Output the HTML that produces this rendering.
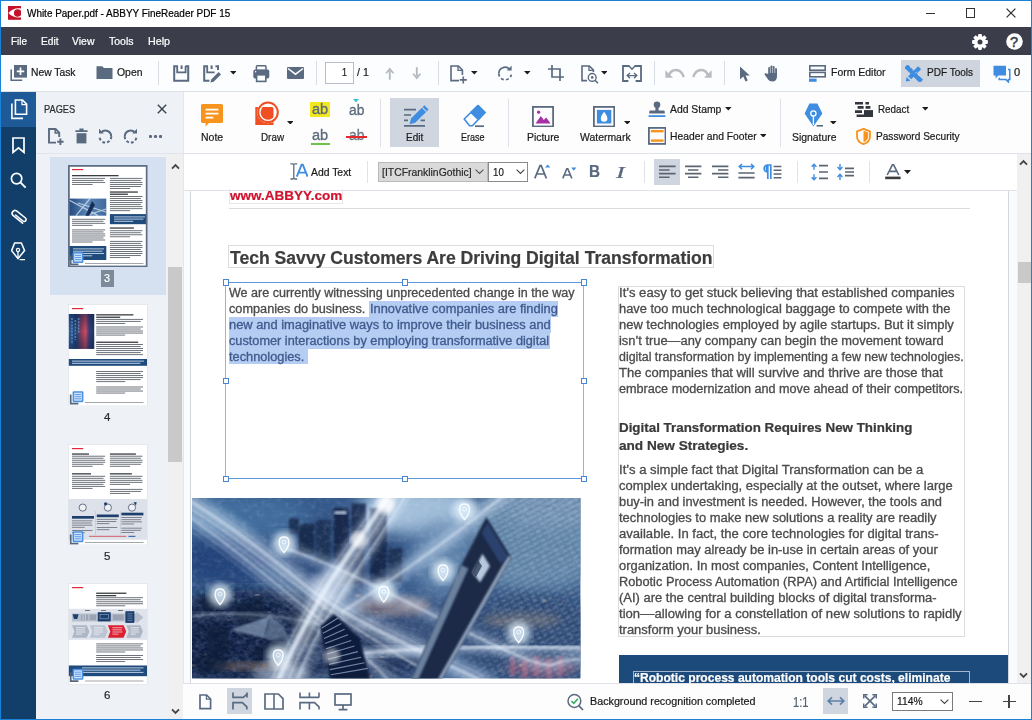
<!DOCTYPE html>
<html>
<head>
<meta charset="utf-8">
<title>White Paper.pdf - ABBYY FineReader PDF 15</title>
<style>
*{margin:0;padding:0;box-sizing:border-box;}
html,body{width:1032px;height:720px;overflow:hidden;background:#fff;}
body{font-family:"Liberation Sans",sans-serif;font-size:12px;color:#1e1e1e;position:relative;}
.abs{position:absolute;display:block;}
.t{position:absolute;display:block;white-space:nowrap;line-height:1;transform-origin:0 0;-webkit-text-stroke-width:0.22px;}
#frame{position:absolute;left:0;top:0;width:1032px;height:720px;border:1px solid #1a82d6;z-index:50;}

</style>
</head>
<body>
<div class="abs" style="left:0.00px;top:0.00px;width:1032.00px;height:27.00px;background:#fff;"></div>
<svg class="abs" style="left:8.00px;top:6.10px;" width="13.2" height="13.8" viewBox="0 0 13.2 13.8"><rect width="13.2" height="13.8" fill="#c4122b"/><path d="M0.4 6.9C3.6 3.4 8.4 1.6 13.2 2.6V11.2C8.4 12.2 3.6 10.4 0.4 6.9Z" fill="#fff"/><circle cx="9.7" cy="6.9" r="3.75" fill="#c4122b"/></svg>
<span class="t" style="left:26.80px;top:8.22px;font-size:11.20px;color:#000;transform:scaleX(0.8888);">White Paper.pdf - ABBYY FineReader PDF 15</span>
<div class="abs" style="left:926.20px;top:12.80px;width:9.20px;height:1.40px;background:#333;"></div>
<div class="abs" style="left:965.80px;top:8.40px;width:9.40px;height:9.40px;border:1.3px solid #333;"></div>
<svg class="abs" style="left:1006.20px;top:8.40px;" width="10" height="10" viewBox="0 0 10 10"><path d="M0.6 0.6L9.4 9.4M9.4 0.6L0.6 9.4" stroke="#333" stroke-width="1.3" fill="none"/></svg>
<div class="abs" style="left:0.00px;top:27.00px;width:1032.00px;height:28.00px;background:#3b3d4a;"></div>
<span class="t" style="left:11.00px;top:35.92px;font-size:11.20px;color:#fff;transform:scaleX(0.8876);">File</span>
<span class="t" style="left:41.00px;top:35.92px;font-size:11.20px;color:#fff;transform:scaleX(0.9078);">Edit</span>
<span class="t" style="left:72.00px;top:35.92px;font-size:11.20px;color:#fff;transform:scaleX(0.9357);">View</span>
<span class="t" style="left:109.00px;top:35.92px;font-size:11.20px;color:#fff;transform:scaleX(0.9381);">Tools</span>
<span class="t" style="left:148.00px;top:35.92px;font-size:11.20px;color:#fff;transform:scaleX(0.9562);">Help</span>
<svg class="abs" style="left:971.20px;top:32.50px;" width="18" height="18" viewBox="0 0 18 18"><g transform="translate(9,9)" fill="#fff"><rect x="-1.9" y="-7.9" width="3.8" height="4.2" rx="0.8" transform="rotate(0)"/><rect x="-1.9" y="-7.9" width="3.8" height="4.2" rx="0.8" transform="rotate(45)"/><rect x="-1.9" y="-7.9" width="3.8" height="4.2" rx="0.8" transform="rotate(90)"/><rect x="-1.9" y="-7.9" width="3.8" height="4.2" rx="0.8" transform="rotate(135)"/><rect x="-1.9" y="-7.9" width="3.8" height="4.2" rx="0.8" transform="rotate(180)"/><rect x="-1.9" y="-7.9" width="3.8" height="4.2" rx="0.8" transform="rotate(225)"/><rect x="-1.9" y="-7.9" width="3.8" height="4.2" rx="0.8" transform="rotate(270)"/><rect x="-1.9" y="-7.9" width="3.8" height="4.2" rx="0.8" transform="rotate(315)"/><circle r="5.9"/><circle r="2.5" fill="#3b3d4a"/></g></svg>
<svg class="abs" style="left:1005.50px;top:33.00px;" width="17" height="17" viewBox="0 0 17 17"><circle cx="8.5" cy="8.5" r="8.3" fill="#fff"/></svg>
<span class="t" style="left:1009.90px;top:34.73px;font-size:14.50px;color:#3b3d4a;-webkit-text-stroke:0.5px #3b3d4a;">?</span>
<div class="abs" style="left:0.00px;top:55.00px;width:1032.00px;height:36.00px;background:#fcfdfe;"></div>
<div class="abs" style="left:0.00px;top:91.00px;width:1032.00px;height:1.00px;background:#dde1e8;"></div>
<svg class="abs" style="left:10.00px;top:64.00px;" width="18" height="18" viewBox="0 0 18 18"><path d="M1.2 5.5V16.3H12.2" stroke="#5a6a80" stroke-width="1.6" fill="none"/><rect x="4" y="1" width="13" height="12.6" fill="#5a6a80"/><path d="M10.5 3.6v7.4M6.8 7.3h7.4" stroke="#fff" stroke-width="1.7"/></svg>
<span class="t" style="left:31.00px;top:67.12px;font-size:11.20px;color:#1a1a1a;transform:scaleX(0.9215);">New Task</span>
<svg class="abs" style="left:95.50px;top:65.00px;" width="17" height="15" viewBox="0 0 17 15"><path d="M0.5 1.2H6.2L8 3H16.5V14H0.5Z" fill="#5a6a80"/></svg>
<span class="t" style="left:117.00px;top:67.12px;font-size:11.20px;color:#1a1a1a;transform:scaleX(0.9318);">Open</span>
<div class="abs" style="left:158.00px;top:61.00px;width:1.00px;height:24.00px;background:#d9dde4;"></div>
<svg class="abs" style="left:173.00px;top:64.50px;" width="17" height="17" viewBox="0 0 17 17"><path d="M5 1.2H1.2V15.8H15.2V1.2H12.4" fill="none" stroke="#5a6a80" stroke-width="2"/><path d="M4.2 1V7.4H12.6V1" fill="none" stroke="#5a6a80" stroke-width="1.8"/><path d="M8.6 0.4V4" stroke="#5a6a80" stroke-width="2"/></svg>
<svg class="abs" style="left:202.50px;top:64.50px;" width="19" height="18" viewBox="0 0 19 18"><path d="M5 1.2H1.2V15.8H6.4" fill="none" stroke="#5a6a80" stroke-width="2"/><path d="M12.4 1.2H15V5" fill="none" stroke="#5a6a80" stroke-width="2"/><path d="M4.2 1V7.4H11.6" fill="none" stroke="#5a6a80" stroke-width="1.8"/><path d="M8.6 0.4V4" stroke="#5a6a80" stroke-width="2"/><path d="M15.6 7L18 9.4L10.6 16.8L7.4 17.6L8.2 14.4Z" fill="#5a6a80"/></svg>
<svg class="abs" style="left:229.70px;top:71.00px;" width="6.6" height="3.6" viewBox="0 0 6.6 3.6"><path d="M0 0H6.6L3.3 3.6Z" fill="#1c1c1c"/></svg>
<svg class="abs" style="left:253.00px;top:65.00px;" width="17" height="17.5" viewBox="0 0 17 17.5"><rect x="3.4" y="0.8" width="9.6" height="4.6" rx="0.8" fill="#fcfdfe" stroke="#5a6a80" stroke-width="1.5"/><rect x="0.3" y="4.6" width="16" height="9" rx="1.8" fill="#5a6a80"/><circle cx="2.6" cy="6.8" r="0.8" fill="#fff"/><rect x="3.6" y="9.8" width="9.2" height="6.6" fill="#fcfdfe" stroke="#5a6a80" stroke-width="1.6"/></svg>
<svg class="abs" style="left:287.00px;top:67.30px;" width="17" height="12" viewBox="0 0 17 12"><rect width="17" height="12" rx="1" fill="#5a6a80"/><path d="M1 1.5L8.5 7.2L16 1.5" fill="none" stroke="#fcfdfe" stroke-width="1.5"/></svg>
<div class="abs" style="left:316.00px;top:61.00px;width:1.00px;height:24.00px;background:#d9dde4;"></div>
<div class="abs" style="left:325.00px;top:61.50px;width:28.50px;height:22.50px;background:#fff;border:1px solid #b7bec9;"></div>
<span class="t" style="left:341.50px;top:67.12px;font-size:11.20px;color:#1a1a1a;transform:scaleX(0.8036);">1</span>
<span class="t" style="left:357.20px;top:67.12px;font-size:11.20px;color:#1a1a1a;transform:scaleX(0.9487);">/ 1</span>
<svg class="abs" style="left:385.30px;top:66.60px;" width="9.6" height="13" viewBox="0 0 9.6 13"><path d="M4.8 4V12.8" stroke="#b4b9c1" stroke-width="1.9"/><path d="M0.2 6.2L4.8 0.4L9.4 6.2L7.6 6.4L4.8 3.4L2 6.4Z" fill="#b4b9c1"/></svg>
<svg class="abs" style="left:412.30px;top:66.60px;" width="9.6" height="13" viewBox="0 0 9.6 13"><path d="M4.8 0.2V9" stroke="#b4b9c1" stroke-width="1.9"/><path d="M0.2 6.8L4.8 12.6L9.4 6.8L7.6 6.6L4.8 9.6L2 6.6Z" fill="#b4b9c1"/></svg>
<div class="abs" style="left:438.00px;top:61.00px;width:1.00px;height:24.00px;background:#d9dde4;"></div>
<svg class="abs" style="left:450.00px;top:64.50px;" width="18" height="19" viewBox="0 0 18 19"><path d="M9 15.6H1V1H8.4L12.4 5V10" fill="none" stroke="#5a6a80" stroke-width="1.6"/><path d="M8 1V5.4H12.4" fill="none" stroke="#5a6a80" stroke-width="1.3"/><path d="M13.3 11.4V18.4M9.8 14.9H16.8" stroke="#5a6a80" stroke-width="1.6"/></svg>
<svg class="abs" style="left:471.20px;top:71.00px;" width="6.6" height="3.6" viewBox="0 0 6.6 3.6"><path d="M0 0H6.6L3.3 3.6Z" fill="#1c1c1c"/></svg>
<svg class="abs" style="left:497.00px;top:64.50px;" width="16" height="17" viewBox="0 0 16 17"><path d="M12.6 4.2A6.3 6.3 0 0 0 1.8 8.6" fill="none" stroke="#5a6a80" stroke-width="1.7"/><path d="M1.8 8.6A6.3 6.3 0 0 0 14.3 9.6" fill="none" stroke="#5a6a80" stroke-width="1.7" stroke-dasharray="3 2.2"/><path d="M9.6 5.6H14.6V0.8Z" fill="#5a6a80"/></svg>
<svg class="abs" style="left:524.10px;top:71.00px;" width="6.6" height="3.6" viewBox="0 0 6.6 3.6"><path d="M0 0H6.6L3.3 3.6Z" fill="#1c1c1c"/></svg>
<svg class="abs" style="left:547.50px;top:65.00px;" width="16" height="16" viewBox="0 0 16 16"><path d="M4 0V12H16M0 4H12V16" fill="none" stroke="#5a6a80" stroke-width="1.7"/></svg>
<svg class="abs" style="left:581.00px;top:64.50px;" width="18" height="19" viewBox="0 0 18 19"><path d="M6 15.6H1V1H8.4L12.4 5V7" fill="none" stroke="#5a6a80" stroke-width="1.6"/><path d="M8 1V5.4H12.4" fill="none" stroke="#5a6a80" stroke-width="1.3"/><circle cx="11.2" cy="12.4" r="3.9" fill="none" stroke="#5a6a80" stroke-width="1.4"/><circle cx="11.2" cy="12.4" r="1.3" fill="#5a6a80"/><path d="M14 15.2L17 18.2" stroke="#5a6a80" stroke-width="1.6"/></svg>
<svg class="abs" style="left:600.90px;top:71.00px;" width="6.6" height="3.6" viewBox="0 0 6.6 3.6"><path d="M0 0H6.6L3.3 3.6Z" fill="#1c1c1c"/></svg>
<svg class="abs" style="left:621.50px;top:64.50px;" width="20" height="17" viewBox="0 0 20 17"><path d="M7.4 1H1V16H6.4M12.6 1H19V16H13.6" fill="none" stroke="#5a6a80" stroke-width="1.8"/><path d="M7 1L10 4.2L13 1" fill="none" stroke="#5a6a80" stroke-width="1.6"/><path d="M5.6 10.6H14.4M8 8L5.2 10.6L8 13.2M12 8L14.8 10.6L12 13.2" fill="none" stroke="#5a6a80" stroke-width="1.4"/></svg>
<div class="abs" style="left:653.50px;top:61.00px;width:1.00px;height:24.00px;background:#d9dde4;"></div>
<svg class="abs" style="left:664.50px;top:66.00px;" width="20" height="13" viewBox="0 0 20 13"><path d="M4 9.4C6.4 2.4 15.4 1.6 18.8 11" fill="none" stroke="#b9bbc1" stroke-width="2.4"/><path d="M0.4 4.2V11.8H8Z" fill="#b9bbc1"/></svg>
<svg class="abs" style="left:692.00px;top:66.00px;" width="20" height="13" viewBox="0 0 20 13"><path d="M16 9.4C13.6 2.4 4.6 1.6 1.2 11" fill="none" stroke="#b9bbc1" stroke-width="2.4"/><path d="M19.6 4.2V11.8H12Z" fill="#b9bbc1"/></svg>
<div class="abs" style="left:723.50px;top:61.00px;width:1.00px;height:24.00px;background:#d9dde4;"></div>
<svg class="abs" style="left:739.00px;top:65.50px;" width="12" height="16" viewBox="0 0 12 16"><path d="M1 0.5V13.2L4.3 10.4L6.5 15.4L8.8 14.4L6.6 9.6L10.8 9.4Z" fill="#5a6a80"/></svg>
<svg class="abs" style="left:763.50px;top:65.00px;" width="16" height="17" viewBox="0 0 16 17"><path d="M4.2 9V3.2a1.1 1.1 0 0 1 2.2 0V7.4V1.6a1.1 1.1 0 0 1 2.2 0V7.2V2.2a1.1 1.1 0 0 1 2.2 0V7.6V4.2a1.1 1.1 0 0 1 2.2 0V11.2C13 14.6 11.2 16.6 8.4 16.6C6 16.6 4.6 15.6 3.4 13.6L0.6 9.4C0.2 8.4 1.6 7.6 2.4 8.6Z" fill="#5a6a80"/><path d="M6.4 2.4V8M8.6 1.6V8M10.8 2.4V8" stroke="#fcfdfe" stroke-width="0.55"/></svg>
<svg class="abs" style="left:809.00px;top:65.00px;" width="17" height="17" viewBox="0 0 17 17"><rect x="0.8" y="0.8" width="15.4" height="4.4" fill="none" stroke="#5a6a80" stroke-width="1.6"/><rect x="0.8" y="7.4" width="15.4" height="4.4" fill="none" stroke="#5a6a80" stroke-width="1.6"/><rect x="0" y="13.6" width="7.6" height="3.2" fill="#3e8de0"/></svg>
<span class="t" style="left:831.40px;top:67.12px;font-size:11.20px;color:#1a1a1a;transform:scaleX(0.9344);">Form Editor</span>
<div class="abs" style="left:901.00px;top:60.00px;width:79.00px;height:26.50px;background:#ced5df;"></div>
<svg class="abs" style="left:905.30px;top:64.60px;" width="17.4" height="17.4" viewBox="0 0 17.4 17.4"><path d="M2.6 2.6L14.8 14.8" stroke="#3e8de0" stroke-width="4.6" stroke-linecap="square"/><path d="M14.6 2.8L4.6 12.8" stroke="#3e8de0" stroke-width="4.4" stroke-linecap="butt"/><path d="M0.8 16.6L1.6 12L5.4 15.8Z" fill="#3e8de0"/><path d="M5.2 3L6.6 1.6M7.8 5.6L9.2 4.2M10.4 8.2L11.8 6.8M13 10.8L14.4 9.4" stroke="#cfe0f5" stroke-width="0.9"/></svg>
<span class="t" style="left:927.30px;top:67.12px;font-size:11.20px;color:#1a1a1a;transform:scaleX(0.8950);">PDF Tools</span>
<svg class="abs" style="left:992.50px;top:64.50px;" width="18" height="18" viewBox="0 0 18 18"><path d="M0.5 0.8H13V10.6H5.4L2.6 13.4V10.6H0.5Z" fill="#3e8de0"/><path d="M15 4.6H16.8V14.6H15.4V17L13 14.6H6.2V12.8" fill="none" stroke="#3e8de0" stroke-width="1.5"/></svg>
<span class="t" style="left:1014.40px;top:67.12px;font-size:11.20px;color:#1a1a1a;transform:scaleX(0.9965);">0</span>
<div class="abs" style="left:0.00px;top:92.00px;width:36.00px;height:628.00px;background:#113f6a;"></div>
<div class="abs" style="left:0.00px;top:92.00px;width:36.00px;height:34.50px;background:#1d5a97;"></div>
<svg class="abs" style="left:9.50px;top:99.00px;" width="19" height="21" viewBox="0 0 19 21"><path d="M1.9 4.4V19.4H13" fill="none" stroke="#fff" stroke-width="1.6"/><path d="M5.4 1H12.4L16.6 5.2V15.2H5.4Z" fill="none" stroke="#fff" stroke-width="1.6"/><path d="M12 1.2V5.6H16.4" fill="none" stroke="#fff" stroke-width="1.2"/></svg>
<svg class="abs" style="left:11.50px;top:136.50px;" width="13" height="17" viewBox="0 0 13 17"><path d="M1 1H12V15.4L6.5 10.8L1 15.4Z" fill="none" stroke="#fff" stroke-width="1.7"/></svg>
<svg class="abs" style="left:10.00px;top:172.00px;" width="17" height="17" viewBox="0 0 17 17"><circle cx="6.6" cy="6.6" r="5.2" fill="none" stroke="#fff" stroke-width="1.7"/><path d="M10.4 10.4L15.6 15.6" stroke="#fff" stroke-width="2"/></svg>
<svg class="abs" style="left:9.50px;top:207.50px;" width="18" height="18" viewBox="0 0 18 18"><path d="M12.6 15.2L3 7.4a2.9 2.9 0 0 1 3.6-4.5L15.4 10a1.9 1.9 0 0 1-2.4 3L5.6 7" fill="none" stroke="#fff" stroke-width="1.6" stroke-linecap="round"/></svg>
<svg class="abs" style="left:11.00px;top:242.00px;" width="15" height="19" viewBox="0 0 15 19"><path d="M3.6 1H10.4L13.6 8.6L7 16.6L0.6 8.6Z" fill="none" stroke="#fff" stroke-width="1.5"/><circle cx="7" cy="8" r="1.6" fill="none" stroke="#fff" stroke-width="1.2"/><path d="M7 9.6V16M8.6 17.6H14" stroke="#fff" stroke-width="1.3"/></svg>
<div class="abs" style="left:183.00px;top:92.00px;width:849.00px;height:61.50px;background:#fdfdfe;"></div>
<div class="abs" style="left:183.00px;top:153.00px;width:849.00px;height:1.00px;background:#dfe2e8;"></div>
<svg class="abs" style="left:201.00px;top:104.00px;" width="22" height="23" viewBox="0 0 22 23"><path d="M1.5 0H20.5A1.5 1.5 0 0 1 22 1.5V17.5A1.5 1.5 0 0 1 20.5 19H8L4.6 22.6V19H1.5A1.5 1.5 0 0 1 0 17.5V1.5A1.5 1.5 0 0 1 1.5 0Z" fill="#f7941d"/><path d="M4.6 5.6H17.4M4.6 9.6H17.4M4.6 13.6H12.4" stroke="#fff" stroke-width="1.7"/></svg>
<span class="t" style="left:201.40px;top:130.98px;font-size:11.60px;color:#1a1a1a;transform:scaleX(0.9065);">Note</span>
<svg class="abs" style="left:255.00px;top:101.00px;" width="24" height="24.5" viewBox="0 0 24 24.5"><defs><clipPath id="dc"><circle cx="13" cy="11.3" r="7.4"/></clipPath></defs><rect x="0.3" y="6" width="18.2" height="18" fill="#f04e23"/><circle cx="13" cy="11.3" r="10.9" fill="#fdfdfe"/><circle cx="13" cy="11.3" r="9.8" fill="none" stroke="#f04e23" stroke-width="2"/><rect x="0.3" y="6" width="18.2" height="18" rx="1.5" fill="#f04e23" clip-path="url(#dc)"/></svg>
<svg class="abs" style="left:286.90px;top:120.50px;" width="6.6" height="3.6" viewBox="0 0 6.6 3.6"><path d="M0 0H6.6L3.3 3.6Z" fill="#1c1c1c"/></svg>
<span class="t" style="left:260.60px;top:130.98px;font-size:11.60px;color:#1a1a1a;transform:scaleX(0.8502);">Draw</span>
<div class="abs" style="left:310.40px;top:101.60px;width:19.80px;height:15.20px;background:#f3e81d;"></div>
<span class="t" style="left:312.20px;top:101.48px;font-size:15.50px;color:#5c6b7c;transform:scaleX(0.9396);-webkit-text-stroke:0.35px #5c6b7c;">ab</span>
<span class="t" style="left:312.20px;top:127.28px;font-size:15.50px;color:#5c6b7c;transform:scaleX(0.9396);-webkit-text-stroke:0.35px #5c6b7c;">ab</span>
<div class="abs" style="left:310.60px;top:143.20px;width:19.80px;height:1.60px;background:#6cc24a;"></div>
<span class="t" style="left:348.60px;top:102.28px;font-size:15.50px;color:#5c6b7c;transform:scaleX(0.8932);-webkit-text-stroke:0.35px #5c6b7c;">ab</span>
<svg class="abs" style="left:352.60px;top:99.20px;" width="6" height="3.4" viewBox="0 0 6 3.4"><path d="M0 0H6L3 3.4Z" fill="#2fc4d6"/></svg>
<span class="t" style="left:348.60px;top:127.28px;font-size:15.50px;color:#6d7886;transform:scaleX(0.8932);-webkit-text-stroke:0.35px #6d7886;">ab</span>
<div class="abs" style="left:346.40px;top:136.20px;width:20.40px;height:1.60px;background:#e8262d;"></div>
<div class="abs" style="left:379.60px;top:99.00px;width:1.00px;height:48.00px;background:#dfe2e8;"></div>
<div class="abs" style="left:389.60px;top:97.80px;width:49.20px;height:49.20px;background:#cfd6e0;"></div>
<svg class="abs" style="left:403.00px;top:103.50px;" width="27" height="24" viewBox="0 0 27 24"><path d="M1 5.6H13M1 11H8M1 16.4H5M17.6 16.4H22M1 21.8H22" stroke="#5a6a80" stroke-width="1.7"/><path d="M21.4 1.2L25.6 5.4L12.2 18.8L6.6 20.2L8 14.6Z" fill="#3e8de0"/><path d="M19.2 3.4L23.4 7.6" stroke="#cfd6e0" stroke-width="1.1"/></svg>
<span class="t" style="left:405.80px;top:130.98px;font-size:11.60px;color:#1a1a1a;transform:scaleX(0.8610);">Edit</span>
<svg class="abs" style="left:463.00px;top:104.00px;" width="23" height="24" viewBox="0 0 23 24"><path d="M15 1.6L22 8.5L9.4 21.8H6.6L1.2 15Z" fill="#fdfdfe" stroke="#3e8de0" stroke-width="1.6" stroke-linejoin="round"/><path d="M15 1.6L22 8.5L15.3 15.5L8 8.4Z" fill="#3e8de0" stroke="#3e8de0" stroke-width="1.6" stroke-linejoin="round"/><path d="M12 22.2H21" stroke="#5a6a80" stroke-width="1.7"/></svg>
<span class="t" style="left:461.00px;top:130.98px;font-size:11.60px;color:#1a1a1a;transform:scaleX(0.7792);">Erase</span>
<div class="abs" style="left:508.00px;top:99.00px;width:1.00px;height:48.00px;background:#dfe2e8;"></div>
<svg class="abs" style="left:532.00px;top:105.50px;" width="22" height="21.5" viewBox="0 0 22 21.5"><rect x="0.9" y="0.9" width="20.2" height="19.6" fill="#fdfdfe" stroke="#5a6a80" stroke-width="1.8"/><path d="M3.6 17.4L8.8 10L11.8 14L14.2 11.6L18.6 17.4Z" fill="#a62fa8"/><circle cx="6.6" cy="6.2" r="1.6" fill="#a62fa8"/></svg>
<span class="t" style="left:526.60px;top:130.98px;font-size:11.60px;color:#1a1a1a;transform:scaleX(0.8979);">Picture</span>
<svg class="abs" style="left:592.50px;top:105.50px;" width="22.5" height="21.5" viewBox="0 0 22.5 21.5"><rect x="0.9" y="0.9" width="20.4" height="19.6" fill="#fdfdfe" stroke="#5a6a80" stroke-width="1.8"/><rect x="3.9" y="3.9" width="14.4" height="13.6" fill="#3e8de0"/><path d="M11.1 5.8C13.2 8.8 14.4 10.6 14.4 12.4A3.3 3.3 0 0 1 7.8 12.4C7.8 10.6 9 8.8 11.1 5.8Z" fill="#fff"/></svg>
<svg class="abs" style="left:623.50px;top:120.50px;" width="6.6" height="3.6" viewBox="0 0 6.6 3.6"><path d="M0 0H6.6L3.3 3.6Z" fill="#1c1c1c"/></svg>
<span class="t" style="left:580.20px;top:130.98px;font-size:11.60px;color:#1a1a1a;transform:scaleX(0.8995);">Watermark</span>
<svg class="abs" style="left:648.00px;top:100.60px;" width="18" height="17" viewBox="0 0 18 17"><circle cx="9" cy="3.8" r="3.3" fill="#5a6a80"/><path d="M7.4 6H10.6V10H7.4Z" fill="#5a6a80"/><path d="M2.6 9.6H15.4A1.4 1.4 0 0 1 16.8 11V12.6H1.2V11A1.4 1.4 0 0 1 2.6 9.6Z" fill="#5a6a80"/><rect x="0.6" y="14.2" width="16.8" height="1.8" fill="#3e8de0"/></svg>
<span class="t" style="left:669.60px;top:103.38px;font-size:11.60px;color:#1a1a1a;transform:scaleX(0.8961);">Add Stamp</span>
<svg class="abs" style="left:725.00px;top:107.00px;" width="6.6" height="3.6" viewBox="0 0 6.6 3.6"><path d="M0 0H6.6L3.3 3.6Z" fill="#1c1c1c"/></svg>
<svg class="abs" style="left:647.50px;top:126.50px;" width="18.5" height="18" viewBox="0 0 18.5 18"><rect x="0.9" y="0.9" width="16.6" height="16" fill="#fdfdfe" stroke="#5a6a80" stroke-width="1.8"/><rect x="2.8" y="3" width="12.8" height="2.4" fill="#f7941d"/><rect x="2.8" y="12.4" width="12.8" height="2.4" fill="#f7941d"/></svg>
<span class="t" style="left:669.60px;top:129.78px;font-size:11.60px;color:#1a1a1a;transform:scaleX(0.8898);">Header and Footer</span>
<svg class="abs" style="left:759.50px;top:133.80px;" width="6.6" height="3.6" viewBox="0 0 6.6 3.6"><path d="M0 0H6.6L3.3 3.6Z" fill="#1c1c1c"/></svg>
<div class="abs" style="left:779.50px;top:99.00px;width:1.00px;height:48.00px;background:#dfe2e8;"></div>
<svg class="abs" style="left:804.00px;top:103.00px;" width="20" height="25" viewBox="0 0 20 25"><path d="M5.4 0.6H13.4L18.4 10.6L9.4 23.6L0.6 10.6Z" fill="#3e8de0"/><circle cx="9.4" cy="10.4" r="2.6" fill="none" stroke="#fff" stroke-width="1.3"/><path d="M9.4 13V22" stroke="#fff" stroke-width="1.3"/><path d="M12.6 22.8H19" stroke="#5a6a80" stroke-width="1.6"/></svg>
<svg class="abs" style="left:830.10px;top:120.50px;" width="6.6" height="3.6" viewBox="0 0 6.6 3.6"><path d="M0 0H6.6L3.3 3.6Z" fill="#1c1c1c"/></svg>
<span class="t" style="left:792.40px;top:130.98px;font-size:11.60px;color:#1a1a1a;transform:scaleX(0.8946);">Signature</span>
<svg class="abs" style="left:854.50px;top:101.50px;" width="18" height="15.5" viewBox="0 0 18 15.5"><path d="M0 1.2H8M10.4 1.2H14M2.6 5.4H8.6M10.6 5.4H15.4M0 9.6H7M9 9.6H18M1.6 13.8H12" stroke="#33363d" stroke-width="2.6"/><path d="M9 8.3H18V15.2H9Z" fill="#33363d"/></svg>
<span class="t" style="left:878.00px;top:103.18px;font-size:11.60px;color:#1a1a1a;transform:scaleX(0.8493);">Redact</span>
<svg class="abs" style="left:921.50px;top:107.00px;" width="6.6" height="3.6" viewBox="0 0 6.6 3.6"><path d="M0 0H6.6L3.3 3.6Z" fill="#1c1c1c"/></svg>
<svg class="abs" style="left:856.00px;top:127.50px;" width="15" height="17" viewBox="0 0 15 17"><path d="M7.5 0.8L14 3.4V8.4C14 12.2 11.2 14.8 7.5 16.2C3.8 14.8 1 12.2 1 8.4V3.4Z" fill="#fdfdfe" stroke="#f7941d" stroke-width="1.8"/><path d="M7.5 2.8V14.2C10.6 12.8 12.2 11 12.2 8.4V4.6Z" fill="#f7941d"/></svg>
<span class="t" style="left:875.60px;top:129.58px;font-size:11.60px;color:#1a1a1a;transform:scaleX(0.8708);">Password Security</span>
<div class="abs" style="left:183.00px;top:154.00px;width:834.00px;height:35.50px;background:#fff;"></div>
<div class="abs" style="left:183.00px;top:189.50px;width:834.00px;height:1.00px;background:#dfe2e8;"></div>
<svg class="abs" style="left:289.50px;top:163.00px;" width="18" height="17" viewBox="0 0 18 17"><path d="M0.4 0.8H2.6C3.4 0.8 3.8 1.4 3.8 2.2V14.6C3.8 15.4 3.4 16 2.6 16H0.4M7.2 0.8H5C4.2 0.8 3.8 1.4 3.8 2.2M7.2 16H5C4.2 16 3.8 15.4 3.8 14.6" fill="none" stroke="#5a6a80" stroke-width="1.3"/><path d="M6.8 13.6L11.6 1.6H12.8L17.6 13.6M8.6 9.6H15.8" fill="none" stroke="#3e8de0" stroke-width="1.9"/></svg>
<span class="t" style="left:310.60px;top:166.38px;font-size:11.60px;color:#1a1a1a;transform:scaleX(0.8953);">Add Text</span>
<div class="abs" style="left:367.00px;top:161.00px;width:1.00px;height:22.00px;background:#dfe2e8;"></div>
<div class="abs" style="left:377.50px;top:161.60px;width:110.50px;height:20.00px;background:#dadada;border:1px solid #b9b9b9;"></div>
<span class="t" style="left:381.80px;top:166.18px;font-size:11.60px;color:#2a2a2a;transform:scaleX(0.8972);">[ITCFranklinGothic]</span>
<svg class="abs" style="left:474.60px;top:169.20px;" width="9" height="5.5" viewBox="0 0 9 5.5"><path d="M0.6 0.6L4.5 4.5L8.4 0.6" fill="none" stroke="#555" stroke-width="1.1"/></svg>
<div class="abs" style="left:487.60px;top:161.60px;width:40.20px;height:20.00px;background:#fff;border:1px solid #8a8a8a;"></div>
<span class="t" style="left:492.80px;top:166.18px;font-size:11.60px;color:#1a1a1a;transform:scaleX(0.8375);">10</span>
<svg class="abs" style="left:515.60px;top:169.20px;" width="9" height="5.5" viewBox="0 0 9 5.5"><path d="M0.6 0.6L4.5 4.5L8.4 0.6" fill="none" stroke="#444" stroke-width="1.1"/></svg>
<svg class="abs" style="left:533.50px;top:163.50px;" width="17" height="15" viewBox="0 0 17 15"><path d="M0.8 14.4L6 1.6H7.2L12.4 14.4M2.8 10H10.4" fill="none" stroke="#5a6a80" stroke-width="1.7"/><path d="M11 3.6H16.4L13.7 0.4Z" fill="#3e8de0"/></svg>
<svg class="abs" style="left:561.50px;top:166.50px;" width="15" height="12" viewBox="0 0 15 12"><path d="M0.8 11.4L4.8 1.8H5.8L9.8 11.4M2.4 8H8.2" fill="none" stroke="#5a6a80" stroke-width="1.6"/><path d="M9.2 0.6H14.4L11.8 3.8Z" fill="#3e8de0"/></svg>
<span class="t" style="left:589.00px;top:163.88px;font-size:16.80px;font-weight:bold;color:#5a6a80;transform:scaleX(0.9068);">B</span>
<span class="t" style="left:615.60px;top:164.04px;font-size:17.00px;font-style:italic;font-family:'Liberation Serif',serif;color:#5a6a80;transform:scaleX(1.5545);">I</span>
<div class="abs" style="left:644.00px;top:161.00px;width:1.00px;height:22.00px;background:#dfe2e8;"></div>
<div class="abs" style="left:654.00px;top:158.80px;width:26.00px;height:26.00px;background:#cfd6e0;"></div>
<svg class="abs" style="left:659.00px;top:164.00px;" width="18" height="16" viewBox="0 0 18 16"><path d="M0.0 2.4H16.6M0.0 6.0H10.6M0.0 9.6H16.6M0.0 13.2H10.6" stroke="#5c6572" stroke-width="1.6" fill="none"/></svg>
<svg class="abs" style="left:685.20px;top:164.00px;" width="18" height="16" viewBox="0 0 18 16"><path d="M0.0 2.4H16.4M3.0 6.0H13.4M0.0 9.6H16.4M3.0 13.2H13.4" stroke="#5c6572" stroke-width="1.6" fill="none"/></svg>
<svg class="abs" style="left:711.60px;top:164.00px;" width="18" height="16" viewBox="0 0 18 16"><path d="M0.0 2.4H16.4M6.0 6.0H16.4M0.0 9.6H16.4M6.0 13.2H16.4" stroke="#5c6572" stroke-width="1.6" fill="none"/></svg>
<svg class="abs" style="left:738.00px;top:162.50px;" width="17" height="17" viewBox="0 0 17 17"><path d="M1.6 3.6H15.4M4 1L1.2 3.6L4 6.2M13 1L15.8 3.6L13 6.2" fill="none" stroke="#3e8de0" stroke-width="1.5"/><path d="M0.4 10H16.6M0.4 14.6H16.6" stroke="#5c6572" stroke-width="1.6"/></svg>
<svg class="abs" style="left:762.80px;top:163.50px;" width="19" height="16" viewBox="0 0 19 16"><path d="M7.8 1V15M4.8 1V15M8.6 1H4.6A3.3 3.3 0 0 0 4.6 8" fill="none" stroke="#3e8de0" stroke-width="1.7"/><path d="M2.4 1.6H5V7.4H2.8Z" fill="#3e8de0"/><path d="M10.6 2.4H18.4M10.6 6.2H18.4M10.6 10H18.4M10.6 13.8H18.4" stroke="#5c6572" stroke-width="1.5"/></svg>
<div class="abs" style="left:796.50px;top:161.00px;width:1.00px;height:22.00px;background:#dfe2e8;"></div>
<svg class="abs" style="left:810.50px;top:162.50px;" width="18" height="18" viewBox="0 0 18 18"><path d="M3 1.4V6.8M0.6 3.8L3 1.2L5.4 3.8M3 16.6V11.2M0.6 14.2L3 16.8L5.4 14.2" fill="none" stroke="#3e8de0" stroke-width="1.4"/><path d="M8 2.6H17M8 9H17M8 15.4H17" stroke="#5c6572" stroke-width="1.6"/></svg>
<svg class="abs" style="left:837.00px;top:162.50px;" width="18" height="18" viewBox="0 0 18 18"><path d="M3 1V6.4M0.6 4L3 6.6L5.4 4M3 17V11.6M0.6 14L3 11.4L5.4 14" fill="none" stroke="#3e8de0" stroke-width="1.4"/><path d="M8 5.4H17M8 9H17M8 12.6H17" stroke="#5c6572" stroke-width="1.6"/></svg>
<div class="abs" style="left:869.30px;top:161.00px;width:1.00px;height:22.00px;background:#dfe2e8;"></div>
<svg class="abs" style="left:885.00px;top:164.00px;" width="16" height="16" viewBox="0 0 16 16"><path d="M2.2 11L7.4 0.8H8.6L13.8 11M4.4 7.4H11.6" fill="none" stroke="#5a6a80" stroke-width="1.6"/><rect x="0.2" y="12.6" width="15.4" height="2.6" fill="#3c3c3c"/></svg>
<svg class="abs" style="left:904.00px;top:169.60px;" width="7" height="4" viewBox="0 0 7 4"><path d="M0 0H7L3.5 4Z" fill="#1c1c1c"/></svg>
<div class="abs" style="left:1017.00px;top:154.00px;width:14.00px;height:529.00px;background:#f0f0f0;"></div>
<div class="abs" style="left:1009.40px;top:190.50px;width:7.60px;height:492.50px;background:#fafbfc;"></div>
<div class="abs" style="left:1017.50px;top:261.50px;width:13.00px;height:21.50px;background:#c9c9c9;"></div>
<svg class="abs" style="left:1019.00px;top:158.50px;" width="9" height="7" viewBox="0 0 9 7"><path d="M1 5.6L4.5 2L8 5.6" fill="none" stroke="#444" stroke-width="1.8"/></svg>
<svg class="abs" style="left:1019.00px;top:671.50px;" width="9" height="7" viewBox="0 0 9 7"><path d="M1 1.4L4.5 5L8 1.4" fill="none" stroke="#444" stroke-width="1.8"/></svg>
<div class="abs" style="left:36.00px;top:92.00px;width:147.00px;height:628.00px;background:#eef1f6;"></div>
<div class="abs" style="left:183.00px;top:92.00px;width:1.00px;height:628.00px;background:#e3e6ec;"></div>
<span class="t" style="left:44.00px;top:103.72px;font-size:11.20px;color:#2b2b2b;transform:scaleX(0.8272);">PAGES</span>
<svg class="abs" style="left:157.00px;top:104.00px;" width="10" height="10" viewBox="0 0 10 10"><path d="M0.8 0.8L9.2 9.2M9.2 0.8L0.8 9.2" stroke="#3a4350" stroke-width="1.4"/></svg>
<svg class="abs" style="left:48.00px;top:127.50px;" width="17" height="18" viewBox="0 0 17 18"><path d="M8 14.6H1V1H7.6L11.2 4.6V9" fill="none" stroke="#5a6a80" stroke-width="1.9"/><path d="M7.2 1V5H11.2" fill="none" stroke="#5a6a80" stroke-width="1.5"/><path d="M12.4 10.6V17M9.2 13.8H15.6" stroke="#5a6a80" stroke-width="1.9"/></svg>
<svg class="abs" style="left:74.50px;top:128.00px;" width="13" height="16" viewBox="0 0 13 16"><path d="M4.4 0.6H8.6V2.2H12.6V4H0.4V2.2H4.4Z" fill="#5a6a80"/><path d="M1.6 5.2H11.4V15.4H1.6Z" fill="#5a6a80"/></svg>
<svg class="abs" style="left:98.00px;top:128.00px;" width="15" height="16" viewBox="0 0 15 16"><path d="M3.2 4.4A5.8 5.8 0 0 1 13.2 8.4" fill="none" stroke="#5a6a80" stroke-width="2"/><path d="M13.2 8.4A5.8 5.8 0 0 1 1.6 9.2" fill="none" stroke="#5a6a80" stroke-width="2" stroke-dasharray="2.8 2"/><path d="M5.8 5.6H1V0.8Z" fill="#5a6a80"/></svg>
<svg class="abs" style="left:122.50px;top:128.00px;" width="15" height="16" viewBox="0 0 15 16"><path d="M11.8 4.4A5.8 5.8 0 0 0 1.8 8.4" fill="none" stroke="#5a6a80" stroke-width="2"/><path d="M1.8 8.4A5.8 5.8 0 0 0 13.4 9.2" fill="none" stroke="#5a6a80" stroke-width="2" stroke-dasharray="2.8 2"/><path d="M9.2 5.6H14V0.8Z" fill="#5a6a80"/></svg>
<svg class="abs" style="left:148.50px;top:134.50px;" width="13" height="3" viewBox="0 0 13 3"><circle cx="1.5" cy="1.5" r="1.6" fill="#5a6a80"/><circle cx="6.5" cy="1.5" r="1.6" fill="#5a6a80"/><circle cx="11.5" cy="1.5" r="1.6" fill="#5a6a80"/></svg>
<div class="abs" style="left:36.00px;top:153.00px;width:147.00px;height:1.00px;background:#e1e5eb;"></div>
<div class="abs" style="left:49.50px;top:156.50px;width:116.50px;height:138.50px;background:#d5e0f0;"></div>
<div class="abs" style="left:167.00px;top:154.00px;width:16.00px;height:566.00px;background:#f0f0f0;"></div>
<div class="abs" style="left:168.30px;top:267.00px;width:13.40px;height:194.50px;background:#c9c9c9;"></div>
<svg class="abs" style="left:170.50px;top:162.50px;" width="9" height="7" viewBox="0 0 9 7"><path d="M1 5.6L4.5 2L8 5.6" fill="none" stroke="#444" stroke-width="1.8"/></svg>
<svg class="abs" style="left:170.50px;top:708.00px;" width="9" height="7" viewBox="0 0 9 7"><path d="M1 1.4L4.5 5L8 1.4" fill="none" stroke="#444" stroke-width="1.8"/></svg>
<svg class="abs" style="left:68.20px;top:164.70px;" width="79.6" height="102.4" viewBox="0 0 79.6 102.4"><rect x="0" y="0" width="79.6" height="102.4" fill="#fff"/><rect x="4" y="4" width="11.2" height="1.2" fill="#e0283a"/><rect x="4.0" y="10.00" width="46.6" height="1.3" fill="#3a3d42"/><rect x="4.0" y="12.90" width="33.2" height="1.0" fill="#6f747c"/><rect x="4.0" y="14.92" width="31.5" height="1.0" fill="#6f747c"/><rect x="4.0" y="16.94" width="33.2" height="1.0" fill="#6f747c"/><rect x="4.0" y="18.96" width="20.6" height="1.0" fill="#6f747c"/><defs><linearGradient id="g3" x1="0" x2="1"><stop offset="0" stop-color="#244a80"/><stop offset="0.5" stop-color="#5c86b6"/><stop offset="1" stop-color="#3f6a9c"/></linearGradient></defs><rect x="1" y="33.6" width="37.3" height="17.1" fill="url(#g3)"/><path d="M1 35L30 50.7M22 33.6L8 50.7M10 38L38 47M20 50L38 44" stroke="#dbe8f6" stroke-width="1.3" opacity="0.75"/><path d="M24 36L27 40L21 50.7H17.5Z" fill="#1a2f56"/><rect x="4.0" y="53.80" width="33.2" height="1.0" fill="#6f747c"/><rect x="4.0" y="55.82" width="31.5" height="1.0" fill="#6f747c"/><rect x="4.0" y="57.84" width="33.2" height="1.0" fill="#6f747c"/><rect x="4.0" y="59.86" width="20.6" height="1.0" fill="#6f747c"/><rect x="4.0" y="64.40" width="33.2" height="1.0" fill="#6f747c"/><rect x="4.0" y="66.42" width="31.5" height="1.0" fill="#6f747c"/><rect x="4.0" y="68.44" width="33.2" height="1.0" fill="#6f747c"/><rect x="4.0" y="70.46" width="33.2" height="1.0" fill="#6f747c"/><rect x="4.0" y="72.48" width="31.5" height="1.0" fill="#6f747c"/><rect x="4.0" y="74.50" width="33.2" height="1.0" fill="#6f747c"/><rect x="4.0" y="76.52" width="20.6" height="1.0" fill="#6f747c"/><rect x="1" y="81" width="37.3" height="14" fill="#1f4b7c"/><rect x="5.0" y="83.40" width="31.0" height="1.0" fill="#b9cce4"/><rect x="5.0" y="85.70" width="29.4" height="1.0" fill="#b9cce4"/><rect x="5.0" y="88.00" width="31.0" height="1.0" fill="#b9cce4"/><rect x="5.0" y="90.30" width="19.2" height="1.0" fill="#b9cce4"/><rect x="41.9" y="12.90" width="32.6" height="1.0" fill="#6f747c"/><rect x="41.9" y="14.92" width="31.0" height="1.0" fill="#6f747c"/><rect x="41.9" y="16.94" width="32.6" height="1.0" fill="#6f747c"/><rect x="41.9" y="18.96" width="32.6" height="1.0" fill="#6f747c"/><rect x="41.9" y="20.98" width="31.0" height="1.0" fill="#6f747c"/><rect x="41.9" y="23.00" width="20.2" height="1.0" fill="#6f747c"/><rect x="41.9" y="26.40" width="28.0" height="1.3" fill="#3a3d42"/><rect x="41.9" y="28.60" width="18.0" height="1.3" fill="#3a3d42"/><rect x="41.9" y="31.00" width="32.6" height="1.0" fill="#6f747c"/><rect x="41.9" y="33.02" width="31.0" height="1.0" fill="#6f747c"/><rect x="41.9" y="35.04" width="32.6" height="1.0" fill="#6f747c"/><rect x="41.9" y="37.06" width="32.6" height="1.0" fill="#6f747c"/><rect x="41.9" y="39.08" width="31.0" height="1.0" fill="#6f747c"/><rect x="41.9" y="41.10" width="32.6" height="1.0" fill="#6f747c"/><rect x="41.9" y="43.12" width="32.6" height="1.0" fill="#6f747c"/><rect x="41.9" y="45.14" width="20.2" height="1.0" fill="#6f747c"/><rect x="41.9" y="49.1" width="37.2" height="10.1" fill="#1f4b7c"/><rect x="46.0" y="51.40" width="31.0" height="1.0" fill="#b9cce4"/><rect x="46.0" y="53.60" width="29.4" height="1.0" fill="#b9cce4"/><rect x="46.0" y="55.80" width="19.2" height="1.0" fill="#b9cce4"/><rect x="41.9" y="62.40" width="24.0" height="1.3" fill="#3a3d42"/><rect x="41.9" y="65.20" width="32.6" height="1.0" fill="#6f747c"/><rect x="41.9" y="67.22" width="31.0" height="1.0" fill="#6f747c"/><rect x="41.9" y="69.24" width="32.6" height="1.0" fill="#6f747c"/><rect x="41.9" y="71.26" width="20.2" height="1.0" fill="#6f747c"/><rect x="41.9" y="75.90" width="32.6" height="1.0" fill="#6f747c"/><rect x="41.9" y="77.92" width="31.0" height="1.0" fill="#6f747c"/><rect x="41.9" y="79.94" width="32.6" height="1.0" fill="#6f747c"/><rect x="41.9" y="81.96" width="32.6" height="1.0" fill="#6f747c"/><rect x="41.9" y="83.98" width="31.0" height="1.0" fill="#6f747c"/><rect x="41.9" y="86.00" width="32.6" height="1.0" fill="#6f747c"/><rect x="41.9" y="88.02" width="32.6" height="1.0" fill="#6f747c"/><rect x="41.9" y="90.04" width="31.0" height="1.0" fill="#6f747c"/><rect x="41.9" y="92.06" width="20.2" height="1.0" fill="#6f747c"/><rect x="17" y="98.2" width="58.5" height="0.8" fill="#8d9197"/><g transform="translate(1.8,87.0)"><path d="M0.9 3.4V12.4H8.6" fill="none" stroke="#55657b" stroke-width="1.7"/><rect x="2.8" y="0" width="10.8" height="11" rx="1.2" fill="#4a90e2"/><rect x="4.4" y="1.5" width="7.6" height="8" fill="#cfe2fa"/><path d="M5.2 3.4H11.2M5.2 5.5H11.2M5.2 7.6H11.2" stroke="#5b9be6" stroke-width="1"/></g><rect x="0.9" y="0.9" width="77.8" height="100.6" fill="none" stroke="#5f7086" stroke-width="1.8"/></svg>
<div class="abs" style="left:100.80px;top:269.80px;width:12.80px;height:17.10px;background:#7c8a99;"></div>
<span class="t" style="left:104.20px;top:272.95px;font-size:11.40px;color:#fff;transform:scaleX(0.9471);">3</span>
<svg class="abs" style="left:68.20px;top:304.00px;" width="79.6" height="102.3" viewBox="0 0 79.6 102.3"><rect x="0" y="0" width="79.6" height="102.3" fill="#fff"/><rect x="4" y="4" width="11.2" height="1.2" fill="#e0283a"/><defs><linearGradient id="g4" x1="0" x2="1"><stop offset="0" stop-color="#2f63a6"/><stop offset="0.3" stop-color="#21406f"/><stop offset="0.55" stop-color="#a8405c"/><stop offset="0.66" stop-color="#d8485c"/><stop offset="0.8" stop-color="#3a3f78"/><stop offset="1" stop-color="#1c3566"/></linearGradient><linearGradient id="g4v" x1="0" y1="0" x2="0" y2="1"><stop offset="0" stop-color="#10244a" stop-opacity="0.55"/><stop offset="0.5" stop-color="#10244a" stop-opacity="0"/><stop offset="1" stop-color="#10244a" stop-opacity="0.5"/></linearGradient></defs><rect x="0.6" y="10" width="25.6" height="34.9" fill="url(#g4)"/><rect x="0.6" y="10" width="25.6" height="34.9" fill="url(#g4v)"/><path d="M4 14V40M7.4 16V36M10.6 14V30" stroke="#7fb4e8" stroke-width="1.6" opacity="0.55" stroke-dasharray="2 1.2"/><rect x="28.2" y="10.20" width="37.2" height="1.3" fill="#3a3d42"/><rect x="28.2" y="12.60" width="24.0" height="1.3" fill="#3a3d42"/><rect x="28.2" y="14.90" width="46.8" height="1.0" fill="#6f747c"/><rect x="28.2" y="16.92" width="44.5" height="1.0" fill="#6f747c"/><rect x="28.2" y="18.94" width="29.0" height="1.0" fill="#6f747c"/><rect x="28.2" y="22.50" width="46.8" height="1.0" fill="#6f747c"/><rect x="28.2" y="24.52" width="44.5" height="1.0" fill="#6f747c"/><rect x="28.2" y="26.54" width="46.8" height="1.0" fill="#6f747c"/><rect x="28.2" y="28.56" width="46.8" height="1.0" fill="#6f747c"/><rect x="28.2" y="30.58" width="29.0" height="1.0" fill="#6f747c"/><rect x="28.2" y="37.60" width="42.0" height="1.3" fill="#3a3d42"/><rect x="28.2" y="40.00" width="46.8" height="1.0" fill="#6f747c"/><rect x="28.2" y="42.02" width="44.5" height="1.0" fill="#6f747c"/><rect x="28.2" y="44.04" width="46.8" height="1.0" fill="#6f747c"/><rect x="28.2" y="46.06" width="46.8" height="1.0" fill="#6f747c"/><rect x="28.2" y="48.08" width="44.5" height="1.0" fill="#6f747c"/><rect x="28.2" y="50.10" width="46.8" height="1.0" fill="#6f747c"/><rect x="0.6" y="55" width="78.4" height="6.8" fill="#1f4b7c"/><rect x="4.0" y="56.60" width="72.0" height="1.0" fill="#b9cce4"/><rect x="4.0" y="58.80" width="68.4" height="1.0" fill="#b9cce4"/><rect x="28.2" y="67.00" width="46.8" height="1.0" fill="#6f747c"/><rect x="28.2" y="69.02" width="44.5" height="1.0" fill="#6f747c"/><rect x="28.2" y="71.04" width="46.8" height="1.0" fill="#6f747c"/><rect x="28.2" y="73.06" width="46.8" height="1.0" fill="#6f747c"/><rect x="28.2" y="75.08" width="44.5" height="1.0" fill="#6f747c"/><rect x="28.2" y="77.10" width="29.0" height="1.0" fill="#6f747c"/><rect x="28.2" y="82.50" width="46.8" height="1.0" fill="#6f747c"/><rect x="28.2" y="84.52" width="44.5" height="1.0" fill="#6f747c"/><rect x="28.2" y="86.54" width="46.8" height="1.0" fill="#6f747c"/><rect x="28.2" y="88.56" width="29.0" height="1.0" fill="#6f747c"/><rect x="17" y="98.2" width="58.5" height="0.8" fill="#8d9197"/><g transform="translate(1.8,87.2)"><path d="M0.9 3.4V12.4H8.6" fill="none" stroke="#55657b" stroke-width="1.7"/><rect x="2.8" y="0" width="10.8" height="11" rx="1.2" fill="#4a90e2"/><rect x="4.4" y="1.5" width="7.6" height="8" fill="#cfe2fa"/><path d="M5.2 3.4H11.2M5.2 5.5H11.2M5.2 7.6H11.2" stroke="#5b9be6" stroke-width="1"/></g><rect x="0.3" y="0.3" width="79" height="101.7" fill="none" stroke="#d7dbe2" stroke-width="0.6"/></svg>
<span class="t" style="left:103.60px;top:411.65px;font-size:11.40px;color:#2b2b2b;transform:scaleX(1.0103);">4</span>
<svg class="abs" style="left:68.20px;top:443.50px;" width="79.6" height="101.3" viewBox="0 0 79.6 101.3"><rect x="0" y="0" width="79.6" height="101.3" fill="#fff"/><rect x="4" y="4" width="11.2" height="1.2" fill="#e0283a"/><rect x="4.0" y="9.40" width="17.0" height="1.3" fill="#3a3d42"/><rect x="4.0" y="11.70" width="33.2" height="1.0" fill="#6f747c"/><rect x="4.0" y="13.72" width="31.5" height="1.0" fill="#6f747c"/><rect x="4.0" y="15.74" width="33.2" height="1.0" fill="#6f747c"/><rect x="4.0" y="17.76" width="33.2" height="1.0" fill="#6f747c"/><rect x="4.0" y="19.78" width="31.5" height="1.0" fill="#6f747c"/><rect x="4.0" y="21.80" width="20.6" height="1.0" fill="#6f747c"/><rect x="4.0" y="29.20" width="19.0" height="1.3" fill="#3a3d42"/><rect x="4.0" y="31.80" width="33.2" height="1.0" fill="#6f747c"/><rect x="4.0" y="33.82" width="31.5" height="1.0" fill="#6f747c"/><rect x="4.0" y="35.84" width="33.2" height="1.0" fill="#6f747c"/><rect x="4.0" y="37.86" width="33.2" height="1.0" fill="#6f747c"/><rect x="4.0" y="39.88" width="31.5" height="1.0" fill="#6f747c"/><rect x="4.0" y="41.90" width="33.2" height="1.0" fill="#6f747c"/><rect x="4.0" y="43.92" width="20.6" height="1.0" fill="#6f747c"/><rect x="41.9" y="9.40" width="26.0" height="1.3" fill="#3a3d42"/><rect x="41.9" y="11.70" width="32.6" height="1.0" fill="#6f747c"/><rect x="41.9" y="13.72" width="31.0" height="1.0" fill="#6f747c"/><rect x="41.9" y="15.74" width="32.6" height="1.0" fill="#6f747c"/><rect x="41.9" y="17.76" width="32.6" height="1.0" fill="#6f747c"/><rect x="41.9" y="19.78" width="31.0" height="1.0" fill="#6f747c"/><rect x="41.9" y="21.80" width="20.2" height="1.0" fill="#6f747c"/><rect x="41.9" y="29.20" width="22.0" height="1.3" fill="#3a3d42"/><rect x="41.9" y="31.80" width="32.6" height="1.0" fill="#6f747c"/><rect x="41.9" y="33.82" width="31.0" height="1.0" fill="#6f747c"/><rect x="41.9" y="35.84" width="32.6" height="1.0" fill="#6f747c"/><rect x="41.9" y="37.86" width="32.6" height="1.0" fill="#6f747c"/><rect x="41.9" y="39.88" width="20.2" height="1.0" fill="#6f747c"/><rect x="41.9" y="44.90" width="32.6" height="1.0" fill="#6f747c"/><rect x="41.9" y="46.92" width="31.0" height="1.0" fill="#6f747c"/><rect x="41.9" y="48.94" width="20.2" height="1.0" fill="#6f747c"/><rect x="0.6" y="55" width="78.4" height="40.8" fill="#dde1ea"/><circle cx="14.7" cy="63.6" r="3.6" fill="#eef1f6" stroke="#46546e" stroke-width="0.8"/><circle cx="39.9" cy="63.6" r="3.6" fill="#eef1f6" stroke="#46546e" stroke-width="0.8"/><circle cx="64.0" cy="63.6" r="3.6" fill="#eef1f6" stroke="#46546e" stroke-width="0.8"/><circle cx="37.6" cy="59.8" r="1.6" fill="#1e3c66"/><path d="M65.4 58.6L68.6 58L68 61.6Z" fill="#1e3c66"/><rect x="4.0" y="72.0" width="22" height="2.7" fill="#1d3f6e"/><rect x="4.0" y="76.40" width="20.5" height="0.9" fill="#737983"/><rect x="4.0" y="78.55" width="19.5" height="0.9" fill="#737983"/><rect x="4.0" y="80.70" width="20.5" height="0.9" fill="#737983"/><rect x="4.0" y="82.85" width="12.7" height="0.9" fill="#737983"/><rect x="4.0" y="86.00" width="20.5" height="0.9" fill="#737983"/><rect x="4.0" y="88.15" width="12.7" height="0.9" fill="#737983"/><rect x="28.8" y="70.5" width="22" height="2.7" fill="#1d3f6e"/><rect x="28.8" y="74.90" width="20.5" height="0.9" fill="#737983"/><rect x="28.8" y="77.05" width="19.5" height="0.9" fill="#737983"/><rect x="28.8" y="79.20" width="12.7" height="0.9" fill="#737983"/><rect x="28.8" y="83.10" width="20.5" height="0.9" fill="#737983"/><rect x="28.8" y="85.25" width="12.7" height="0.9" fill="#737983"/><rect x="27.4" y="67" width="0.5" height="24" fill="#b4bbc8"/><rect x="53.4" y="68.7" width="22" height="2.7" fill="#1d3f6e"/><rect x="53.4" y="73.10" width="20.5" height="0.9" fill="#737983"/><rect x="53.4" y="75.25" width="19.5" height="0.9" fill="#737983"/><rect x="53.4" y="77.40" width="20.5" height="0.9" fill="#737983"/><rect x="53.4" y="79.55" width="12.7" height="0.9" fill="#737983"/><rect x="53.4" y="83.70" width="20.5" height="0.9" fill="#737983"/><rect x="53.4" y="85.85" width="19.5" height="0.9" fill="#737983"/><rect x="53.4" y="88.00" width="12.7" height="0.9" fill="#737983"/><rect x="52.0" y="67" width="0.5" height="24" fill="#b4bbc8"/><rect x="21" y="91.8" width="37.4" height="1.1" fill="#d46a78"/><rect x="60.4" y="91.8" width="7" height="1.1" fill="#2d63a8"/><rect x="17" y="98.2" width="58.5" height="0.8" fill="#8d9197"/><g transform="translate(1.8,87.2)"><path d="M0.9 3.4V12.4H8.6" fill="none" stroke="#55657b" stroke-width="1.7"/><rect x="2.8" y="0" width="10.8" height="11" rx="1.2" fill="#4a90e2"/><rect x="4.4" y="1.5" width="7.6" height="8" fill="#cfe2fa"/><path d="M5.2 3.4H11.2M5.2 5.5H11.2M5.2 7.6H11.2" stroke="#5b9be6" stroke-width="1"/></g><rect x="0.3" y="0.3" width="79" height="100.7" fill="none" stroke="#d7dbe2" stroke-width="0.6"/></svg>
<span class="t" style="left:103.60px;top:550.95px;font-size:11.40px;color:#2b2b2b;transform:scaleX(1.0103);">5</span>
<svg class="abs" style="left:68.20px;top:583.00px;" width="79.6" height="101.7" viewBox="0 0 79.6 101.7"><rect x="0" y="0" width="79.6" height="101.7" fill="#fff"/><rect x="4" y="4" width="11.2" height="1.2" fill="#e0283a"/><rect x="28.2" y="9.60" width="30.2" height="1.3" fill="#3a3d42"/><rect x="28.2" y="12.00" width="20.0" height="1.3" fill="#3a3d42"/><rect x="28.2" y="14.20" width="46.8" height="1.0" fill="#6f747c"/><rect x="28.2" y="16.22" width="44.5" height="1.0" fill="#6f747c"/><rect x="28.2" y="18.24" width="46.8" height="1.0" fill="#6f747c"/><rect x="28.2" y="20.26" width="46.8" height="1.0" fill="#6f747c"/><rect x="28.2" y="22.28" width="29.0" height="1.0" fill="#6f747c"/><rect x="0.6" y="25.8" width="78.4" height="31" fill="#dfe3ec"/><path d="M4 30.6H68.4V28.4L75.5 34.5L68.4 40.6V38.4H4Z" fill="#b7bfcd"/><path d="M4.6 31.2H10.6L9.2 36H6Z" fill="#1d3f6e"/><rect x="13" y="31.6" width="15" height="5.6" fill="#99a3b4"/><path d="M15 31.6V37.2M17.4 31.6V37.2M21 31.6V37.2" stroke="#dfe3ec" stroke-width="0.7"/><rect x="29.8" y="29.2" width="12.9" height="9.2" fill="#1d3f6e"/><rect x="32" y="31.4" width="8.6" height="4.4" fill="none" stroke="#8fa9cb" stroke-width="0.6"/><rect x="45" y="31.6" width="10.6" height="5.6" fill="#99a3b4"/><rect x="57.4" y="28.2" width="9" height="11.7" fill="#1d3f6e"/><path d="M59.4 30.8H64.4M59.4 33H64.4M59.4 35.2H64.4M59.4 37.4H64.4" stroke="#8fa9cb" stroke-width="0.6"/><rect x="17.0" y="27" width="5" height="0.8" fill="#555"/><rect x="33.0" y="27" width="5" height="0.8" fill="#555"/><rect x="50.0" y="27" width="5" height="0.8" fill="#555"/><path d="M4.0 42.3H18.8L21.4 48.5L18.8 54.8H4.0L6.4 48.5Z" fill="#aeb7c6"/><path d="M21.8 42.3H37.0L39.6 48.5L37.0 54.8H21.8L24.2 48.5Z" fill="#bcc4d1"/><path d="M39.9 42.3H55.6L58.2 48.5L55.6 54.8H39.9L42.3 48.5Z" fill="#dc1f31"/><path d="M58.4 42.3H72.3L74.9 48.5L72.3 54.8H58.4L60.8 48.5Z" fill="#aeb7c6"/><rect x="44.4" y="44.40" width="10.0" height="0.8" fill="#f6c9cd"/><rect x="44.4" y="46.50" width="9.5" height="0.8" fill="#f6c9cd"/><rect x="44.4" y="48.60" width="10.0" height="0.8" fill="#f6c9cd"/><rect x="44.4" y="50.70" width="6.2" height="0.8" fill="#f6c9cd"/><rect x="8.0" y="44.40" width="9.4" height="0.8" fill="#eef1f6"/><rect x="8.0" y="46.50" width="8.9" height="0.8" fill="#eef1f6"/><rect x="8.0" y="48.60" width="9.4" height="0.8" fill="#eef1f6"/><rect x="8.0" y="50.70" width="5.8" height="0.8" fill="#eef1f6"/><rect x="25.8" y="44.40" width="9.4" height="0.8" fill="#eef1f6"/><rect x="25.8" y="46.50" width="8.9" height="0.8" fill="#eef1f6"/><rect x="25.8" y="48.60" width="9.4" height="0.8" fill="#eef1f6"/><rect x="25.8" y="50.70" width="5.8" height="0.8" fill="#eef1f6"/><rect x="62.6" y="44.40" width="8.4" height="0.8" fill="#eef1f6"/><rect x="62.6" y="46.50" width="8.0" height="0.8" fill="#eef1f6"/><rect x="62.6" y="48.60" width="8.4" height="0.8" fill="#eef1f6"/><rect x="62.6" y="50.70" width="5.2" height="0.8" fill="#eef1f6"/><rect x="28.2" y="60.40" width="46.8" height="1.0" fill="#6f747c"/><rect x="28.2" y="62.42" width="44.5" height="1.0" fill="#6f747c"/><rect x="28.2" y="64.44" width="46.8" height="1.0" fill="#6f747c"/><rect x="28.2" y="66.46" width="46.8" height="1.0" fill="#6f747c"/><rect x="28.2" y="68.48" width="29.0" height="1.0" fill="#6f747c"/><rect x="28.2" y="72.00" width="46.8" height="1.0" fill="#6f747c"/><rect x="28.2" y="74.02" width="44.5" height="1.0" fill="#6f747c"/><rect x="28.2" y="76.04" width="46.8" height="1.0" fill="#6f747c"/><rect x="28.2" y="78.06" width="29.0" height="1.0" fill="#6f747c"/><rect x="0.6" y="82.5" width="78.4" height="10.7" fill="#1f4b7c"/><rect x="14.0" y="84.40" width="61.5" height="1.0" fill="#b9cce4"/><rect x="14.0" y="86.65" width="58.4" height="1.0" fill="#b9cce4"/><rect x="14.0" y="88.90" width="61.5" height="1.0" fill="#b9cce4"/><rect x="17" y="97.6" width="58.5" height="0.8" fill="#8d9197"/><g transform="translate(1.8,85.8)"><path d="M0.9 3.4V12.4H8.6" fill="none" stroke="#55657b" stroke-width="1.7"/><rect x="2.8" y="0" width="10.8" height="11" rx="1.2" fill="#4a90e2"/><rect x="4.4" y="1.5" width="7.6" height="8" fill="#cfe2fa"/><path d="M5.2 3.4H11.2M5.2 5.5H11.2M5.2 7.6H11.2" stroke="#5b9be6" stroke-width="1"/></g><rect x="0.3" y="0.3" width="79" height="101.1" fill="none" stroke="#d7dbe2" stroke-width="0.6"/></svg>
<span class="t" style="left:103.60px;top:690.35px;font-size:11.40px;color:#2b2b2b;transform:scaleX(1.0103);">6</span>
<div class="abs" style="left:184.00px;top:190.50px;width:833.00px;height:492.50px;background:#fafbfc;"></div>
<div class="abs" style="left:190.00px;top:190.50px;width:819.40px;height:492.50px;background:#fff;border-left:1px solid #d3d6db;border-right:1px solid #d3d6db;"></div>
<div class="abs" style="left:228.60px;top:189.00px;width:114.00px;height:14.60px;border:1px solid #e6e6e6;border-top:none;"></div>
<span class="t" style="left:229.60px;top:188.80px;font-size:13.00px;font-weight:bold;color:#cf1430;transform:scaleX(1.0401);">www.ABBYY.com</span>
<div class="abs" style="left:229.00px;top:207.60px;width:741.00px;height:1.00px;background:#dcdcdc;"></div>
<div class="abs" style="left:228.20px;top:245.40px;width:486.00px;height:22.60px;border:1px solid #dcdcdc;"></div>
<span class="t" style="left:229.80px;top:250.10px;font-size:17.60px;font-weight:bold;color:#3d3d3d;transform:scaleX(0.9992);">Tech Savvy Customers Are Driving Digital Transformation</span>
<div class="abs" style="left:369.40px;top:301.40px;width:188.60px;height:15.80px;background:#b5cdf3;"></div>
<div class="abs" style="left:229.20px;top:317.20px;width:322.20px;height:15.90px;background:#b5cdf3;"></div>
<div class="abs" style="left:229.20px;top:333.10px;width:320.60px;height:15.90px;background:#b5cdf3;"></div>
<div class="abs" style="left:229.20px;top:349.00px;width:79.20px;height:14.60px;background:#b5cdf3;"></div>
<span class="t" style="left:229.30px;top:287.04px;font-size:12.00px;color:#4b4b4b;transform:scaleX(1.0449);-webkit-text-stroke:0.3px #4b4b4b;">We are currently witnessing unprecedented change in the way</span>
<span class="t" style="left:229.30px;top:302.94px;font-size:12.00px;color:#4b4b4b;transform:scaleX(1.0587);-webkit-text-stroke:0.3px #4b4b4b;">companies do business.</span>
<span class="t" style="left:369.80px;top:302.94px;font-size:12.00px;color:#3f5a8c;transform:scaleX(1.0704);-webkit-text-stroke:0.3px #3f5a8c;">Innovative companies are finding</span>
<span class="t" style="left:229.30px;top:318.84px;font-size:12.00px;color:#3f5a8c;transform:scaleX(1.0718);-webkit-text-stroke:0.3px #3f5a8c;">new and imaginative ways to improve their business and</span>
<span class="t" style="left:229.30px;top:334.74px;font-size:12.00px;color:#3f5a8c;transform:scaleX(1.0595);-webkit-text-stroke:0.3px #3f5a8c;">customer interactions by employing transformative digital</span>
<span class="t" style="left:229.30px;top:350.64px;font-size:12.00px;color:#3f5a8c;transform:scaleX(1.0648);-webkit-text-stroke:0.3px #3f5a8c;">technologies.</span>
<div class="abs" style="left:225.40px;top:281.60px;width:358.60px;height:197.00px;border:1.4px solid #5b96de;border-left-color:#9fb1c6;border-right-color:#9fb1c6;"></div>
<div class="abs" style="left:223.00px;top:279.40px;width:6.20px;height:6.20px;background:#fff;border:1px solid #4a86cf;"></div>
<div class="abs" style="left:402.00px;top:279.40px;width:6.20px;height:6.20px;background:#fff;border:1px solid #4a86cf;"></div>
<div class="abs" style="left:580.80px;top:279.40px;width:6.20px;height:6.20px;background:#fff;border:1px solid #4a86cf;"></div>
<div class="abs" style="left:223.00px;top:377.60px;width:6.20px;height:6.20px;background:#fff;border:1px solid #4a86cf;"></div>
<div class="abs" style="left:580.80px;top:377.60px;width:6.20px;height:6.20px;background:#fff;border:1px solid #4a86cf;"></div>
<div class="abs" style="left:223.00px;top:475.80px;width:6.20px;height:6.20px;background:#fff;border:1px solid #4a86cf;"></div>
<div class="abs" style="left:402.00px;top:475.80px;width:6.20px;height:6.20px;background:#fff;border:1px solid #4a86cf;"></div>
<div class="abs" style="left:580.80px;top:475.80px;width:6.20px;height:6.20px;background:#fff;border:1px solid #4a86cf;"></div>
<div class="abs" style="left:618.40px;top:286.00px;width:346.20px;height:350.60px;border:1px solid #dcdcdc;"></div>
<span class="t" style="left:619.40px;top:286.84px;font-size:12.00px;color:#4b4b4b;transform:scaleX(1.0898);-webkit-text-stroke:0.3px #4b4b4b;">It’s easy to get stuck believing that established companies</span>
<span class="t" style="left:619.40px;top:302.84px;font-size:12.00px;color:#4b4b4b;transform:scaleX(1.0706);-webkit-text-stroke:0.3px #4b4b4b;">have too much technological baggage to compete with the</span>
<span class="t" style="left:619.40px;top:318.84px;font-size:12.00px;color:#4b4b4b;transform:scaleX(1.0794);-webkit-text-stroke:0.3px #4b4b4b;">new technologies employed by agile startups. But it simply</span>
<span class="t" style="left:619.40px;top:334.84px;font-size:12.00px;color:#4b4b4b;transform:scaleX(1.0719);-webkit-text-stroke:0.3px #4b4b4b;">isn’t true—any company can begin the movement toward</span>
<span class="t" style="left:619.40px;top:350.84px;font-size:12.00px;color:#4b4b4b;transform:scaleX(1.0333);-webkit-text-stroke:0.3px #4b4b4b;">digital transformation by implementing a few new technologies.</span>
<span class="t" style="left:619.40px;top:366.84px;font-size:12.00px;color:#4b4b4b;transform:scaleX(1.0812);-webkit-text-stroke:0.3px #4b4b4b;">The companies that will survive and thrive are those that</span>
<span class="t" style="left:619.40px;top:382.84px;font-size:12.00px;color:#4b4b4b;transform:scaleX(1.0525);-webkit-text-stroke:0.3px #4b4b4b;">embrace modernization and move ahead of their competitors.</span>
<span class="t" style="left:619.40px;top:421.53px;font-size:12.60px;font-weight:bold;color:#3a3a3a;transform:scaleX(1.0615);">Digital Transformation Requires New Thinking</span>
<span class="t" style="left:619.40px;top:439.53px;font-size:12.60px;font-weight:bold;color:#3a3a3a;transform:scaleX(1.0796);">and New Strategies.</span>
<span class="t" style="left:619.40px;top:464.04px;font-size:12.00px;color:#4b4b4b;transform:scaleX(1.0920);-webkit-text-stroke:0.3px #4b4b4b;">It’s a simple fact that Digital Transformation can be a</span>
<span class="t" style="left:619.40px;top:479.99px;font-size:12.00px;color:#4b4b4b;transform:scaleX(1.0802);-webkit-text-stroke:0.3px #4b4b4b;">complex undertaking, especially at the outset, where large</span>
<span class="t" style="left:619.40px;top:495.94px;font-size:12.00px;color:#4b4b4b;transform:scaleX(1.0712);-webkit-text-stroke:0.3px #4b4b4b;">buy-in and investment is needed. However, the tools and</span>
<span class="t" style="left:619.40px;top:511.89px;font-size:12.00px;color:#4b4b4b;transform:scaleX(1.0797);-webkit-text-stroke:0.3px #4b4b4b;">technologies to make new solutions a reality are readily</span>
<span class="t" style="left:619.40px;top:527.84px;font-size:12.00px;color:#4b4b4b;transform:scaleX(1.0889);-webkit-text-stroke:0.3px #4b4b4b;">available. In fact, the core technologies for digital trans-</span>
<span class="t" style="left:619.40px;top:543.79px;font-size:12.00px;color:#4b4b4b;transform:scaleX(1.0741);-webkit-text-stroke:0.3px #4b4b4b;">formation may already be in-use in certain areas of your</span>
<span class="t" style="left:619.40px;top:559.74px;font-size:12.00px;color:#4b4b4b;transform:scaleX(1.0781);-webkit-text-stroke:0.3px #4b4b4b;">organization. In most companies, Content Intelligence,</span>
<span class="t" style="left:619.40px;top:575.69px;font-size:12.00px;color:#4b4b4b;transform:scaleX(1.0650);-webkit-text-stroke:0.3px #4b4b4b;">Robotic Process Automation (RPA) and Artificial Intelligence</span>
<span class="t" style="left:619.40px;top:591.64px;font-size:12.00px;color:#4b4b4b;transform:scaleX(1.0798);-webkit-text-stroke:0.3px #4b4b4b;">(AI) are the central building blocks of digital transforma-</span>
<span class="t" style="left:619.40px;top:607.59px;font-size:12.00px;color:#4b4b4b;transform:scaleX(1.0881);-webkit-text-stroke:0.3px #4b4b4b;">tion––allowing for a constellation of new solutions to rapidly</span>
<span class="t" style="left:619.40px;top:623.54px;font-size:12.00px;color:#4b4b4b;transform:scaleX(1.0793);-webkit-text-stroke:0.3px #4b4b4b;">transform your business.</span>
<div class="abs" style="left:618.80px;top:655.00px;width:389.60px;height:28.00px;background:#1c4a7b;"></div>
<div class="abs" style="left:618.8px;top:655px;width:389.6px;height:28px;overflow:hidden;"><div class="abs" style="left:14.6px;top:16.4px;width:337px;height:30px;border:1px solid rgba(255,255,255,0.6);"></div><span class="t" style="left:15.60px;top:16.00px;font-size:13.00px;font-weight:bold;color:#fff;transform:scaleX(0.9280);">“Robotic process automation tools cut costs, eliminate</span></div>
<svg class="abs" style="left:192.00px;top:498.00px;" width="388.5" height="180.5" viewBox="0 0 388.5 180.5"><defs><filter id="b1" x="-10%" y="-10%" width="120%" height="120%"><feGaussianBlur stdDeviation="0.8"/></filter><filter id="b2" x="-10%" y="-10%" width="120%" height="120%"><feGaussianBlur stdDeviation="2"/></filter><filter id="b3" x="-15%" y="-15%" width="130%" height="130%"><feGaussianBlur stdDeviation="3.5"/></filter><filter id="b6" x="-30%" y="-30%" width="160%" height="160%"><feGaussianBlur stdDeviation="8"/></filter><filter id="tx" x="0" y="0" width="100%" height="100%"><feTurbulence type="fractalNoise" baseFrequency="0.22 0.3" numOctaves="3" seed="7"/><feColorMatrix type="matrix" values="0 0 0 0 0.1  0 0 0 0 0.18  0 0 0 0 0.35  1.6 0 0 0 -0.55"/></filter><filter id="tx2" x="0" y="0" width="100%" height="100%"><feTurbulence type="fractalNoise" baseFrequency="0.16 0.2" numOctaves="3" seed="11"/><feColorMatrix type="matrix" values="0 0 0 0 0.82  0 0 0 0 0.9  0 0 0 0 1  0 1.7 0 0 -0.75"/></filter><pattern id="blk" width="7" height="5" patternUnits="userSpaceOnUse" patternTransform="rotate(-28)"><rect x="0.6" y="0.6" width="4.6" height="2.6" fill="#9db9d4" opacity="0.55"/><rect x="0" y="3.6" width="7" height="1.2" fill="#1c3358" opacity="0.35"/></pattern><linearGradient id="fade" x1="0" x2="1"><stop offset="0" stop-color="#fff" stop-opacity="0"/><stop offset="0.35" stop-color="#fff" stop-opacity="1"/></linearGradient><mask id="mk"><rect x="270" y="0" width="119" height="181" fill="url(#fade)"/></mask><clipPath id="cc"><rect width="388.5" height="180.5"/></clipPath></defs><g clip-path="url(#cc)"><rect width="388.5" height="180.5" fill="#375b8c"/><ellipse cx="45" cy="18" rx="70" ry="22" fill="#43709f" opacity="0.9" filter="url(#b6)"/><ellipse cx="30" cy="62" rx="55" ry="22" fill="#21427a" opacity="0.95" filter="url(#b6)"/><ellipse cx="60" cy="140" rx="110" ry="48" fill="#111f40" opacity="1" filter="url(#b6)"/><ellipse cx="175" cy="150" rx="70" ry="35" fill="#1b2d55" opacity="0.9" filter="url(#b6)"/><ellipse cx="150" cy="60" rx="60" ry="40" fill="#2a4676" opacity="0.7" filter="url(#b6)"/><ellipse cx="225" cy="12" rx="60" ry="24" fill="#a9c5df" opacity="0.95" filter="url(#b6)"/><ellipse cx="345" cy="40" rx="70" ry="55" fill="#6b8eae" opacity="1" filter="url(#b6)"/><ellipse cx="360" cy="10" rx="50" ry="20" fill="#84a3c0" opacity="0.8" filter="url(#b6)"/><ellipse cx="250" cy="60" rx="30" ry="40" fill="#6f93b8" opacity="0.7" filter="url(#b6)"/><ellipse cx="340" cy="140" rx="80" ry="45" fill="#2d4873" opacity="1" filter="url(#b6)"/><ellipse cx="230" cy="130" rx="40" ry="30" fill="#3a527d" opacity="0.8" filter="url(#b6)"/><ellipse cx="200" cy="108" rx="38" ry="10" fill="#c58a72" opacity="0.45" filter="url(#b3)"/><ellipse cx="350" cy="170" rx="36" ry="10" fill="#a0627f" opacity="0.6" filter="url(#b3)"/><ellipse cx="330" cy="122" rx="40" ry="8" fill="#c9a070" opacity="0.3" filter="url(#b3)"/><ellipse cx="60" cy="168" rx="40" ry="5" fill="#c99a6a" opacity="0.35" filter="url(#b2)"/><rect x="141.4" y="10" width="15.5" height="56" fill="#162849" opacity="0.92" filter="url(#b1)"/><rect x="159" y="5.5" width="15" height="44" fill="#1a2d52" opacity="0.92" filter="url(#b1)"/><rect x="178.2" y="10" width="16.5" height="76" fill="#14264a" opacity="0.92" filter="url(#b1)"/><rect x="124" y="22" width="14.5" height="42" fill="#1d3156" opacity="0.92" filter="url(#b1)"/><rect x="106.5" y="26" width="16" height="30" fill="#172a4c" opacity="0.92" filter="url(#b1)"/><rect x="97" y="20" width="10" height="16" fill="#1d3256" opacity="0.92" filter="url(#b1)"/><rect x="150" y="45" width="22" height="42" fill="#1a2e52" opacity="0.92" filter="url(#b1)"/><rect x="196" y="50" width="14" height="34" fill="#1c3055" opacity="0.92" filter="url(#b1)"/><rect x="142.5" y="13" width="12" height="3.4" fill="#c9dcef" opacity="0.8" filter="url(#b1)"/><path d="M38 132L72 140L78 118Z" fill="#7f93ae" opacity="0.8" filter="url(#b1)"/><path d="M78 118L72 140L100 150L92 128Z" fill="#5b6f8c" opacity="0.85" filter="url(#b1)"/><rect x="270" y="0" width="119" height="181" filter="url(#tx)" opacity="0.55"/><rect x="0" y="85" width="250" height="96" filter="url(#tx)" opacity="0.5"/><rect x="0" y="0" width="389" height="181" filter="url(#tx2)" opacity="0.16"/><rect x="270" y="0" width="119" height="181" fill="url(#blk)" opacity="0.36" mask="url(#mk)"/><rect x="308.5" y="173.1" width="4.1" height="1.2" fill="#ffe2b8" opacity="0.46" filter="url(#b1)"/><rect x="180.7" y="173.1" width="3.8" height="1.2" fill="#e89a62" opacity="0.50" filter="url(#b1)"/><rect x="182.0" y="113.2" width="3.4" height="1.2" fill="#ffe2b8" opacity="0.55" filter="url(#b1)"/><rect x="70.6" y="166.6" width="2.9" height="1.2" fill="#f0b070" opacity="0.51" filter="url(#b1)"/><rect x="0.7" y="166.9" width="2.2" height="1.2" fill="#e89a62" opacity="0.83" filter="url(#b1)"/><rect x="64.4" y="106.3" width="2.6" height="1.2" fill="#e89a62" opacity="0.67" filter="url(#b1)"/><rect x="365.1" y="151.4" width="4.9" height="1.2" fill="#d98aa0" opacity="0.57" filter="url(#b1)"/><rect x="140.1" y="106.3" width="2.0" height="1.2" fill="#f0b070" opacity="0.58" filter="url(#b1)"/><rect x="317.2" y="142.4" width="3.6" height="1.2" fill="#f3c9a0" opacity="0.48" filter="url(#b1)"/><rect x="137.9" y="118.3" width="3.9" height="1.2" fill="#e89a62" opacity="0.64" filter="url(#b1)"/><rect x="378.3" y="94.0" width="4.1" height="1.2" fill="#d98aa0" opacity="0.46" filter="url(#b1)"/><rect x="305.6" y="123.5" width="3.5" height="1.2" fill="#f0b070" opacity="0.63" filter="url(#b1)"/><rect x="370.3" y="102.2" width="2.4" height="1.2" fill="#d98aa0" opacity="0.59" filter="url(#b1)"/><rect x="137.7" y="137.1" width="4.2" height="1.2" fill="#f0b070" opacity="0.69" filter="url(#b1)"/><rect x="303.0" y="123.6" width="2.5" height="1.2" fill="#d98aa0" opacity="0.83" filter="url(#b1)"/><rect x="35.4" y="121.3" width="3.6" height="1.2" fill="#e89a62" opacity="0.59" filter="url(#b1)"/><rect x="358.6" y="138.9" width="2.6" height="1.2" fill="#f3c9a0" opacity="0.57" filter="url(#b1)"/><rect x="309.9" y="145.9" width="4.0" height="1.2" fill="#f3c9a0" opacity="0.85" filter="url(#b1)"/><rect x="62.7" y="96.2" width="5.0" height="1.2" fill="#ffe2b8" opacity="0.82" filter="url(#b1)"/><rect x="12.3" y="155.7" width="2.7" height="1.2" fill="#f3c9a0" opacity="0.63" filter="url(#b1)"/><rect x="163.6" y="96.8" width="4.7" height="1.2" fill="#f0b070" opacity="0.77" filter="url(#b1)"/><rect x="129.7" y="109.8" width="4.9" height="1.2" fill="#ffe2b8" opacity="0.83" filter="url(#b1)"/><rect x="41.4" y="129.4" width="2.0" height="1.2" fill="#d98aa0" opacity="0.57" filter="url(#b1)"/><rect x="175.8" y="177.9" width="4.5" height="1.2" fill="#ffe2b8" opacity="0.63" filter="url(#b1)"/><rect x="189.4" y="154.7" width="3.2" height="1.2" fill="#f3c9a0" opacity="0.64" filter="url(#b1)"/><rect x="349.9" y="101.7" width="4.4" height="1.2" fill="#ffe2b8" opacity="0.83" filter="url(#b1)"/><rect x="131.3" y="99.7" width="2.5" height="1.2" fill="#ffe2b8" opacity="0.80" filter="url(#b1)"/><rect x="140.2" y="159.6" width="4.2" height="1.2" fill="#ffe2b8" opacity="0.72" filter="url(#b1)"/><rect x="188.4" y="158.2" width="3.9" height="1.2" fill="#f3c9a0" opacity="0.83" filter="url(#b1)"/><rect x="131.9" y="107.4" width="4.5" height="1.2" fill="#d98aa0" opacity="0.67" filter="url(#b1)"/><rect x="97.3" y="149.8" width="3.1" height="1.2" fill="#ffe2b8" opacity="0.71" filter="url(#b1)"/><rect x="309.5" y="121.9" width="3.8" height="1.2" fill="#d98aa0" opacity="0.59" filter="url(#b1)"/><rect x="327.0" y="166.8" width="3.9" height="1.2" fill="#f3c9a0" opacity="0.83" filter="url(#b1)"/><rect x="201.0" y="137.5" width="2.1" height="1.2" fill="#f3c9a0" opacity="0.82" filter="url(#b1)"/><rect x="185.2" y="151.5" width="4.0" height="1.2" fill="#d98aa0" opacity="0.52" filter="url(#b1)"/><rect x="302.8" y="142.0" width="3.8" height="1.2" fill="#d98aa0" opacity="0.57" filter="url(#b1)"/><rect x="318" y="158" width="5" height="20" fill="#b06a88" opacity="0.55" filter="url(#b1)"/><rect x="330" y="161" width="5" height="20" fill="#b06a88" opacity="0.55" filter="url(#b1)"/><rect x="342" y="158" width="5" height="20" fill="#b06a88" opacity="0.55" filter="url(#b1)"/><rect x="354" y="161" width="5" height="20" fill="#b06a88" opacity="0.55" filter="url(#b1)"/><rect x="366" y="158" width="5" height="20" fill="#b06a88" opacity="0.55" filter="url(#b1)"/><rect x="6" y="100" width="26" height="16" fill="#0d1a36" opacity="0.6" filter="url(#b2)" transform="rotate(-18 6 100)"/><rect x="40" y="108" width="30" height="20" fill="#0d1a36" opacity="0.6" filter="url(#b2)" transform="rotate(-18 40 108)"/><rect x="10" y="130" width="22" height="30" fill="#0d1a36" opacity="0.6" filter="url(#b2)" transform="rotate(-18 10 130)"/><rect x="96" y="118" width="22" height="30" fill="#0d1a36" opacity="0.6" filter="url(#b2)" transform="rotate(-18 96 118)"/><rect x="60" y="150" width="36" height="14" fill="#0d1a36" opacity="0.6" filter="url(#b2)" transform="rotate(-18 60 150)"/><rect x="2" y="160" width="30" height="20" fill="#0d1a36" opacity="0.6" filter="url(#b2)" transform="rotate(-18 2 160)"/><path d="M-4 2C40 28 80 60 114 88S200 140 292 184" fill="none" stroke="#dcecff" stroke-width="22" opacity="0.33" filter="url(#b3)" stroke-linecap="round"/><path d="M-4 18C40 48 86 88 126 120S176 160 198 184" fill="none" stroke="#dcecff" stroke-width="12" opacity="0.3" filter="url(#b3)" stroke-linecap="round"/><path d="M197 -3C180 25 150 65 137 86S100 150 86 184" fill="none" stroke="#dcecff" stroke-width="18" opacity="0.45" filter="url(#b3)" stroke-linecap="round"/><path d="M214 -3C196 28 166 70 152 92S116 152 104 184" fill="none" stroke="#dcecff" stroke-width="10" opacity="0.3" filter="url(#b3)" stroke-linecap="round"/><path d="M92 50C150 68 220 108 300 146S350 158 392 162" fill="none" stroke="#dcecff" stroke-width="12" opacity="0.33" filter="url(#b3)" stroke-linecap="round"/><path d="M150 158C200 150 300 148 392 150" fill="none" stroke="#dcecff" stroke-width="10" opacity="0.42" filter="url(#b3)" stroke-linecap="round"/><path d="M150 114C200 82 260 40 312 -3" fill="none" stroke="#dcecff" stroke-width="16" opacity="0.38" filter="url(#b3)" stroke-linecap="round"/><path d="M0 118C50 112 100 118 150 132" fill="none" stroke="#dcecff" stroke-width="6" opacity="0.22" filter="url(#b3)" stroke-linecap="round"/><path d="M-4 2C40 28 80 60 114 88S200 140 292 184" fill="none" stroke="#eef6ff" stroke-width="4.5" opacity="0.5" filter="url(#b1)" stroke-linecap="round"/><path d="M-4 18C40 48 86 88 126 120S176 160 198 184" fill="none" stroke="#eef6ff" stroke-width="2.2" opacity="0.42" filter="url(#b1)" stroke-linecap="round"/><path d="M197 -3C180 25 150 65 137 86S100 150 86 184" fill="none" stroke="#eef6ff" stroke-width="4.5" opacity="0.75" filter="url(#b1)" stroke-linecap="round"/><path d="M214 -3C196 28 166 70 152 92S116 152 104 184" fill="none" stroke="#eef6ff" stroke-width="2.4" opacity="0.48" filter="url(#b1)" stroke-linecap="round"/><path d="M92 50C150 68 220 108 300 146S350 158 392 162" fill="none" stroke="#eef6ff" stroke-width="2.6" opacity="0.48" filter="url(#b1)" stroke-linecap="round"/><path d="M150 158C200 150 300 148 392 150" fill="none" stroke="#eef6ff" stroke-width="3" opacity="0.55" filter="url(#b1)" stroke-linecap="round"/><path d="M150 114C200 82 260 40 312 -3" fill="none" stroke="#eef6ff" stroke-width="3" opacity="0.42" filter="url(#b1)" stroke-linecap="round"/><path d="M0 118C50 112 100 118 150 132" fill="none" stroke="#eef6ff" stroke-width="1.4" opacity="0.35" filter="url(#b1)" stroke-linecap="round"/><path d="M-4 9C40 36 82 70 118 98S190 146 250 184" fill="none" stroke="#ffffff" stroke-width="1.6" opacity="0.5" filter="url(#b1)" stroke-linecap="round"/><path d="M-4 -3C40 22.5 80 54.25 114 82S200 134 292 178" fill="none" stroke="#f4f9ff" stroke-width="1.1" opacity="0.35" filter="url(#b1)" stroke-linecap="round"/><path d="M-4 6C40 32.4 80 64.6 114 92.8S200 144.8 292 188.8" fill="none" stroke="#f4f9ff" stroke-width="1.1" opacity="0.4" filter="url(#b1)" stroke-linecap="round"/><path d="M-4 15C40 42.3 80 74.95 114 103.6S200 155.6 292 199.6" fill="none" stroke="#f4f9ff" stroke-width="1.1" opacity="0.35" filter="url(#b1)" stroke-linecap="round"/><path d="M-4 26C40 54.4 80 87.6 114 116.8S200 168.8 292 212.8" fill="none" stroke="#f4f9ff" stroke-width="1.1" opacity="0.3" filter="url(#b1)" stroke-linecap="round"/><path d="M-4 32C40 61 80 94.5 114 124S200 176 292 220" fill="none" stroke="#f4f9ff" stroke-width="1.1" opacity="0.25" filter="url(#b1)" stroke-linecap="round"/><path d="M189 -3C172 25 142 65 129 86S92.8 150 78.8 184" fill="none" stroke="#f4f9ff" stroke-width="1.1" opacity="0.4" filter="url(#b1)" stroke-linecap="round"/><path d="M194 -3C177 25 147 65 134 86S97.3 150 83.3 184" fill="none" stroke="#f4f9ff" stroke-width="1.1" opacity="0.45" filter="url(#b1)" stroke-linecap="round"/><path d="M202 -3C185 25 155 65 142 86S104.5 150 90.5 184" fill="none" stroke="#f4f9ff" stroke-width="1.1" opacity="0.4" filter="url(#b1)" stroke-linecap="round"/><path d="M209 -3C192 25 162 65 149 86S110.8 150 96.8 184" fill="none" stroke="#f4f9ff" stroke-width="1.1" opacity="0.35" filter="url(#b1)" stroke-linecap="round"/><path d="M219 -3C202 25 172 65 159 86S119.8 150 105.8 184" fill="none" stroke="#f4f9ff" stroke-width="1.1" opacity="0.3" filter="url(#b1)" stroke-linecap="round"/><ellipse cx="60" cy="40" rx="55" ry="14" fill="#cfe0f2" opacity="0" filter="url(#b3)"/><path d="M205 -3C188 26 158 67 144 89S108 151 95 184" fill="none" stroke="#ffffff" stroke-width="1.6" opacity="0.55" filter="url(#b1)" stroke-linecap="round"/><path d="M100 184C130 150 175 120 235 100" fill="none" stroke="#dcecff" stroke-width="5" opacity="0.3" filter="url(#b3)" stroke-linecap="round"/><path d="M120 184C160 160 220 150 260 150" fill="none" stroke="#dcecff" stroke-width="4" opacity="0.3" filter="url(#b3)" stroke-linecap="round"/><ellipse cx="140" cy="88" rx="22" ry="16" fill="#eaf3ff" opacity="0.5" filter="url(#b3)"/><ellipse cx="90" cy="176" rx="30" ry="10" fill="#dfeaf8" opacity="0.45" filter="url(#b3)"/><path d="M128 128L142 116L168 140L178 181H138Z" fill="#101e3e" filter="url(#b1)"/><path d="M130 130L146 120" stroke="#9db5d2" stroke-width="1.1" opacity="0.7"/><path d="M131 135.2L149.3 125.6" stroke="#9db5d2" stroke-width="1.1" opacity="0.7"/><path d="M132 140.4L152.6 131.2" stroke="#9db5d2" stroke-width="1.1" opacity="0.7"/><path d="M133 145.6L155.9 136.8" stroke="#9db5d2" stroke-width="1.1" opacity="0.7"/><path d="M134 150.8L159.2 142.4" stroke="#9db5d2" stroke-width="1.1" opacity="0.7"/><path d="M135 156L162.5 148" stroke="#9db5d2" stroke-width="1.1" opacity="0.7"/><path d="M136 161.2L165.8 153.6" stroke="#9db5d2" stroke-width="1.1" opacity="0.7"/><path d="M137 166.4L169.1 159.2" stroke="#9db5d2" stroke-width="1.1" opacity="0.7"/><path d="M138 171.6L172.4 164.8" stroke="#9db5d2" stroke-width="1.1" opacity="0.7"/><path d="M139 176.8L175.7 170.4" stroke="#9db5d2" stroke-width="1.1" opacity="0.7"/><path d="M294.3 19L319.3 59.5L249.3 182H219.3L269.3 67Z" fill="#1e2946" filter="url(#b1)"/><path d="M269.3 67L276.4 70.5L226 182H219.3Z" fill="#6f86a3" opacity="0.95" filter="url(#b1)"/><path d="M319.3 59.5L249.3 182H245.4L316 57.6Z" fill="#a9bdd6" opacity="0.8" filter="url(#b1)"/><path d="M295.6 25L316.2 58.6L308.4 65.6L289.6 35Z" fill="#2e4676" opacity="0.85" filter="url(#b1)"/><path d="M290.5 55.8L298 68L288 84.5L280.5 74.5Z" fill="#c0d3e6" opacity="0.95" filter="url(#b1)"/><path d="M286 62L290 68L284 79L280.5 74.5Z" fill="#1e2946" opacity="0.7"/><circle cx="92" cy="45" r="11.5" fill="#e6f6ff" opacity="0.78" filter="url(#b3)"/><path d="M92 54.5C84.75 46.5 86.25 39 92 39C97.75 39 99.25 46.5 92 54.5Z" fill="#cfe6fa" fill-opacity="0.35" stroke="#ffffff" stroke-width="1.3" opacity="0.95"/><circle cx="92" cy="44" r="2" fill="none" stroke="#fff" stroke-width="0.9" opacity="0.8"/><circle cx="28" cy="97" r="11.5" fill="#e6f6ff" opacity="0.78" filter="url(#b3)"/><path d="M28 106.5C20.75 98.5 22.25 91 28 91C33.75 91 35.25 98.5 28 106.5Z" fill="#cfe6fa" fill-opacity="0.35" stroke="#ffffff" stroke-width="1.3" opacity="0.95"/><circle cx="28" cy="96" r="2" fill="none" stroke="#fff" stroke-width="0.9" opacity="0.8"/><circle cx="86.2" cy="158" r="11.5" fill="#e6f6ff" opacity="0.78" filter="url(#b3)"/><path d="M86.2 167.5C78.95 159.5 80.45 152 86.2 152C91.95 152 93.45 159.5 86.2 167.5Z" fill="#cfe6fa" fill-opacity="0.35" stroke="#ffffff" stroke-width="1.3" opacity="0.95"/><circle cx="86.2" cy="157" r="2" fill="none" stroke="#fff" stroke-width="0.9" opacity="0.8"/><circle cx="272.5" cy="12" r="11.5" fill="#e6f6ff" opacity="0.78" filter="url(#b3)"/><path d="M272.5 21.5C265.25 13.5 266.75 6 272.5 6C278.25 6 279.75 13.5 272.5 21.5Z" fill="#cfe6fa" fill-opacity="0.35" stroke="#ffffff" stroke-width="1.3" opacity="0.95"/><circle cx="272.5" cy="11" r="2" fill="none" stroke="#fff" stroke-width="0.9" opacity="0.8"/><circle cx="251" cy="73" r="11.5" fill="#e6f6ff" opacity="0.78" filter="url(#b3)"/><path d="M251 82.5C243.75 74.5 245.25 67 251 67C256.75 67 258.25 74.5 251 82.5Z" fill="#cfe6fa" fill-opacity="0.35" stroke="#ffffff" stroke-width="1.3" opacity="0.95"/><circle cx="251" cy="72" r="2" fill="none" stroke="#fff" stroke-width="0.9" opacity="0.8"/><circle cx="326.7" cy="135" r="11.5" fill="#e6f6ff" opacity="0.78" filter="url(#b3)"/><path d="M326.7 144.5C319.45 136.5 320.95 129 326.7 129C332.45 129 333.95 136.5 326.7 144.5Z" fill="#cfe6fa" fill-opacity="0.35" stroke="#ffffff" stroke-width="1.3" opacity="0.95"/><circle cx="326.7" cy="134" r="2" fill="none" stroke="#fff" stroke-width="0.9" opacity="0.8"/><circle cx="191.8" cy="94.5" r="11.5" fill="#e6f6ff" opacity="0.78" filter="url(#b3)"/><path d="M191.8 104C184.55 96 186.05 88.5 191.8 88.5C197.55 88.5 199.05 96 191.8 104Z" fill="#cfe6fa" fill-opacity="0.35" stroke="#ffffff" stroke-width="1.3" opacity="0.95"/><circle cx="191.8" cy="93.5" r="2" fill="none" stroke="#fff" stroke-width="0.9" opacity="0.8"/><ellipse cx="193.7" cy="6.7" rx="9" ry="9" fill="#ffffff" opacity="0.8" filter="url(#b2)"/><ellipse cx="166.6" cy="41.6" rx="8" ry="8" fill="#ffffff" opacity="0.7" filter="url(#b2)"/><ellipse cx="140" cy="158" rx="8" ry="8" fill="#ffffff" opacity="0.5" filter="url(#b2)"/></g></svg>
<div class="abs" style="left:183.00px;top:683.00px;width:849.00px;height:37.00px;background:#fdfdfe;"></div>
<div class="abs" style="left:183.00px;top:682.60px;width:849.00px;height:1.00px;background:#dfe2e8;"></div>
<svg class="abs" style="left:199.00px;top:694.00px;" width="13" height="16" viewBox="0 0 13 16"><path d="M1 1H7.6L11.6 5V14.6H1Z" fill="none" stroke="#5a6a80" stroke-width="1.7"/><path d="M7.4 1V5.2H11.6" fill="none" stroke="#5a6a80" stroke-width="1.2"/></svg>
<div class="abs" style="left:227.00px;top:688.00px;width:24.80px;height:25.80px;background:#cfd6e0;"></div>
<svg class="abs" style="left:231.50px;top:692.00px;" width="16" height="18" viewBox="0 0 16 18"><path d="M1 0.4V5.4H11.4L15 2M15 0.4V5.4M1 17.6V10.6H10.4L14.8 14.8V17.6" fill="none" stroke="#5a6a80" stroke-width="1.7"/></svg>
<svg class="abs" style="left:264.00px;top:692.50px;" width="20" height="17" viewBox="0 0 20 17"><path d="M1 1H14.4L19 5.6V16H1Z" fill="none" stroke="#5a6a80" stroke-width="1.7"/><path d="M10 1V16" stroke="#5a6a80" stroke-width="1.6"/></svg>
<svg class="abs" style="left:298.50px;top:692.00px;" width="21" height="18" viewBox="0 0 21 18"><path d="M1 0.4V5.4H20M20 0.4V5.4M10.4 0.4V5.4M1 17.6V10.6H15.6L20 14.8V17.6M10.4 10.6V17.6" fill="none" stroke="#5a6a80" stroke-width="1.6"/></svg>
<svg class="abs" style="left:334.00px;top:692.50px;" width="18" height="18" viewBox="0 0 18 18"><rect x="1" y="1" width="16" height="11" fill="none" stroke="#5a6a80" stroke-width="1.7"/><path d="M9 12V16M4.6 16.6H13.4" stroke="#5a6a80" stroke-width="1.7"/></svg>
<svg class="abs" style="left:567.00px;top:693.00px;" width="17" height="18" viewBox="0 0 17 18"><circle cx="7.4" cy="8" r="6.4" fill="none" stroke="#5a6a80" stroke-width="1.5"/><path d="M4.4 8L6.8 10.4L10.8 5.8" fill="none" stroke="#2fae5e" stroke-width="1.6"/><path d="M12 12.8L16 17" stroke="#5a6a80" stroke-width="1.8"/></svg>
<span class="t" style="left:590.00px;top:695.72px;font-size:11.20px;color:#1a1a1a;transform:scaleX(0.9601);">Background recognition completed</span>
<span class="t" style="left:793.00px;top:694.55px;font-size:14.00px;color:#55606e;transform:scaleX(0.7913);">1:1</span>
<div class="abs" style="left:823.00px;top:687.80px;width:24.80px;height:26.00px;background:#cfd6e0;"></div>
<svg class="abs" style="left:826.50px;top:696.00px;" width="18" height="10" viewBox="0 0 18 10"><path d="M1.6 5H16.4M5 1.4L1.2 5L5 8.6M13 1.4L16.8 5L13 8.6" fill="none" stroke="#5d7fa6" stroke-width="1.7"/></svg>
<svg class="abs" style="left:863.00px;top:694.00px;" width="14" height="14" viewBox="0 0 14 14"><path d="M1.6 1.6L12.4 12.4M12.4 1.6L1.6 12.4" stroke="#5a6a80" stroke-width="1.6"/><path d="M0.6 4.6V0.6H4.6M9.4 0.6H13.4V4.6M13.4 9.4V13.4H9.4M4.6 13.4H0.6V9.4" fill="none" stroke="#5a6a80" stroke-width="1.6"/></svg>
<div class="abs" style="left:891.80px;top:692.00px;width:61.20px;height:19.00px;background:#fff;border:1px solid #7a7a7a;"></div>
<span class="t" style="left:896.80px;top:695.92px;font-size:11.20px;color:#1a1a1a;transform:scaleX(0.9214);">114%</span>
<svg class="abs" style="left:939.60px;top:699.20px;" width="9" height="5.5" viewBox="0 0 9 5.5"><path d="M0.6 0.6L4.5 4.5L8.4 0.6" fill="none" stroke="#444" stroke-width="1.1"/></svg>
<div class="abs" style="left:968.50px;top:700.60px;width:13.00px;height:1.50px;background:#444;"></div>
<div class="abs" style="left:1002.50px;top:700.60px;width:13.00px;height:1.50px;background:#444;"></div>
<div class="abs" style="left:1008.30px;top:694.80px;width:1.50px;height:13.00px;background:#444;"></div>
<div id="frame"></div>
</body>
</html>
